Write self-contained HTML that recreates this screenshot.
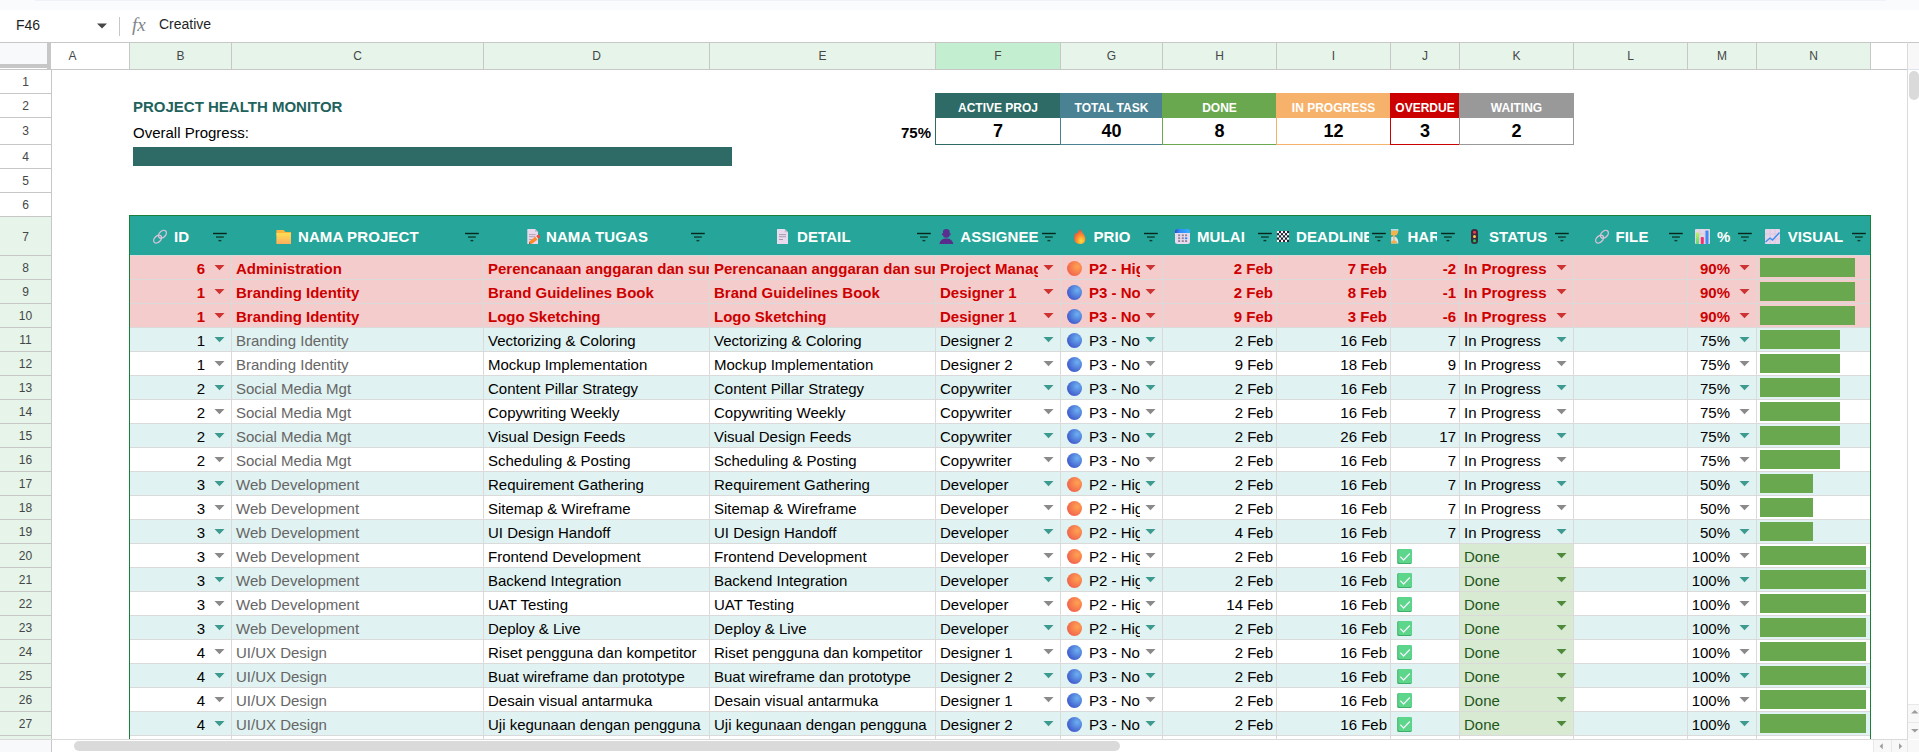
<!DOCTYPE html>
<html><head><meta charset="utf-8"><style>
html,body{margin:0;padding:0;}
body{width:1919px;height:752px;overflow:hidden;position:relative;background:#fff;font-family:"Liberation Sans", sans-serif;}
body div, body svg{position:absolute;}
.t{white-space:nowrap;}
</style></head><body>
<svg style="left:0;top:0" width="0" height="0"><defs>
<radialGradient id="go" cx="68%" cy="38%" r="80%"><stop offset="0" stop-color="#ffa252"/><stop offset="1" stop-color="#ef5a4a"/></radialGradient>
<radialGradient id="gb" cx="68%" cy="35%" r="80%"><stop offset="0" stop-color="#6cb0f0"/><stop offset="1" stop-color="#3a50c8"/></radialGradient>
<linearGradient id="gc" x1="0" y1="0" x2="0" y2="1"><stop offset="0" stop-color="#6fd38a"/><stop offset="1" stop-color="#3cae5d"/></linearGradient>
</defs></svg>
<div style="left:0px;top:0px;width:1919px;height:10px;background:#f9fbfd;"></div><div style="left:35px;top:0px;width:1851px;height:1px;background:#eef2f8;"></div><div class="t" style="left:16px;top:17px;font-size:14px;line-height:16px;color:#1f1f1f;transform-origin:0 13px;">F46</div><svg style="left:96px;top:22px" width="12" height="8"><path d="M1 1.5h10l-5 5z" fill="#444746"/></svg><div style="left:119px;top:17px;width:1px;height:19px;background:#c7c7c7;"></div><div class="t" style="left:132px;top:14px;font-size:19px;line-height:21px;color:#80868b;transform-origin:0 17px;font-family:'Liberation Serif',serif;"><i>fx</i></div><div class="t" style="left:159px;top:16px;font-size:14px;line-height:16px;color:#1f1f1f;transform-origin:0 13px;">Creative</div><div style="left:0px;top:42px;width:1907px;height:1px;background:#c7c7c7;"></div><div style="left:0px;top:69px;width:1907px;height:1px;background:#c7c7c7;"></div><div style="left:0px;top:43px;width:47px;height:21px;background:#f8f9fa;"></div><div style="left:47px;top:43px;width:4px;height:26px;background:#c7c7c7;"></div><div style="left:0px;top:64px;width:47px;height:4px;background:#c7c7c7;"></div><div style="left:52px;top:43px;width:77px;height:26px;background:#ffffff;"></div><div style="left:129px;top:43px;width:1px;height:26px;background:#c7c7c7;"></div><div class="t" style="left:51px;top:49px;font-size:12px;line-height:14px;color:#444746;transform-origin:0 11px;width:43px;text-align:center;">A</div><div style="left:130px;top:43px;width:101px;height:26px;background:#e6f4ea;"></div><div style="left:231px;top:43px;width:1px;height:26px;background:#c7c7c7;"></div><div class="t" style="left:130px;top:49px;font-size:12px;line-height:14px;color:#444746;transform-origin:0 11px;width:101px;text-align:center;">B</div><div style="left:232px;top:43px;width:251px;height:26px;background:#e6f4ea;"></div><div style="left:483px;top:43px;width:1px;height:26px;background:#c7c7c7;"></div><div class="t" style="left:232px;top:49px;font-size:12px;line-height:14px;color:#444746;transform-origin:0 11px;width:251px;text-align:center;">C</div><div style="left:484px;top:43px;width:225px;height:26px;background:#e6f4ea;"></div><div style="left:709px;top:43px;width:1px;height:26px;background:#c7c7c7;"></div><div class="t" style="left:484px;top:49px;font-size:12px;line-height:14px;color:#444746;transform-origin:0 11px;width:225px;text-align:center;">D</div><div style="left:710px;top:43px;width:225px;height:26px;background:#e6f4ea;"></div><div style="left:935px;top:43px;width:1px;height:26px;background:#c7c7c7;"></div><div class="t" style="left:710px;top:49px;font-size:12px;line-height:14px;color:#444746;transform-origin:0 11px;width:225px;text-align:center;">E</div><div style="left:936px;top:43px;width:124px;height:26px;background:#c4eed0;"></div><div style="left:1060px;top:43px;width:1px;height:26px;background:#c7c7c7;"></div><div class="t" style="left:936px;top:49px;font-size:12px;line-height:14px;color:#444746;transform-origin:0 11px;width:124px;text-align:center;">F</div><div style="left:1061px;top:43px;width:101px;height:26px;background:#e6f4ea;"></div><div style="left:1162px;top:43px;width:1px;height:26px;background:#c7c7c7;"></div><div class="t" style="left:1061px;top:49px;font-size:12px;line-height:14px;color:#444746;transform-origin:0 11px;width:101px;text-align:center;">G</div><div style="left:1163px;top:43px;width:113px;height:26px;background:#e6f4ea;"></div><div style="left:1276px;top:43px;width:1px;height:26px;background:#c7c7c7;"></div><div class="t" style="left:1163px;top:49px;font-size:12px;line-height:14px;color:#444746;transform-origin:0 11px;width:113px;text-align:center;">H</div><div style="left:1277px;top:43px;width:113px;height:26px;background:#e6f4ea;"></div><div style="left:1390px;top:43px;width:1px;height:26px;background:#c7c7c7;"></div><div class="t" style="left:1277px;top:49px;font-size:12px;line-height:14px;color:#444746;transform-origin:0 11px;width:113px;text-align:center;">I</div><div style="left:1391px;top:43px;width:68px;height:26px;background:#e6f4ea;"></div><div style="left:1459px;top:43px;width:1px;height:26px;background:#c7c7c7;"></div><div class="t" style="left:1391px;top:49px;font-size:12px;line-height:14px;color:#444746;transform-origin:0 11px;width:68px;text-align:center;">J</div><div style="left:1460px;top:43px;width:113px;height:26px;background:#e6f4ea;"></div><div style="left:1573px;top:43px;width:1px;height:26px;background:#c7c7c7;"></div><div class="t" style="left:1460px;top:49px;font-size:12px;line-height:14px;color:#444746;transform-origin:0 11px;width:113px;text-align:center;">K</div><div style="left:1574px;top:43px;width:113px;height:26px;background:#e6f4ea;"></div><div style="left:1687px;top:43px;width:1px;height:26px;background:#c7c7c7;"></div><div class="t" style="left:1574px;top:49px;font-size:12px;line-height:14px;color:#444746;transform-origin:0 11px;width:113px;text-align:center;">L</div><div style="left:1688px;top:43px;width:68px;height:26px;background:#e6f4ea;"></div><div style="left:1756px;top:43px;width:1px;height:26px;background:#c7c7c7;"></div><div class="t" style="left:1688px;top:49px;font-size:12px;line-height:14px;color:#444746;transform-origin:0 11px;width:68px;text-align:center;">M</div><div style="left:1757px;top:43px;width:113px;height:26px;background:#e6f4ea;"></div><div style="left:1870px;top:43px;width:1px;height:26px;background:#c7c7c7;"></div><div class="t" style="left:1757px;top:49px;font-size:12px;line-height:14px;color:#444746;transform-origin:0 11px;width:113px;text-align:center;">N</div><div style="left:0px;top:70px;width:51px;height:23px;background:#ffffff;"></div><div style="left:0px;top:93px;width:51px;height:1px;background:#c7c7c7;"></div><div class="t" style="left:0px;top:75px;font-size:12px;line-height:14px;color:#444746;transform-origin:0 11px;width:51px;text-align:center;">1</div><div style="left:0px;top:94px;width:51px;height:23px;background:#ffffff;"></div><div style="left:0px;top:117px;width:51px;height:1px;background:#c7c7c7;"></div><div class="t" style="left:0px;top:99px;font-size:12px;line-height:14px;color:#444746;transform-origin:0 11px;width:51px;text-align:center;">2</div><div style="left:0px;top:118px;width:51px;height:26px;background:#ffffff;"></div><div style="left:0px;top:144px;width:51px;height:1px;background:#c7c7c7;"></div><div class="t" style="left:0px;top:124px;font-size:12px;line-height:14px;color:#444746;transform-origin:0 11px;width:51px;text-align:center;">3</div><div style="left:0px;top:145px;width:51px;height:23px;background:#ffffff;"></div><div style="left:0px;top:168px;width:51px;height:1px;background:#c7c7c7;"></div><div class="t" style="left:0px;top:150px;font-size:12px;line-height:14px;color:#444746;transform-origin:0 11px;width:51px;text-align:center;">4</div><div style="left:0px;top:169px;width:51px;height:23px;background:#ffffff;"></div><div style="left:0px;top:192px;width:51px;height:1px;background:#c7c7c7;"></div><div class="t" style="left:0px;top:174px;font-size:12px;line-height:14px;color:#444746;transform-origin:0 11px;width:51px;text-align:center;">5</div><div style="left:0px;top:193px;width:51px;height:23px;background:#ffffff;"></div><div style="left:0px;top:216px;width:51px;height:1px;background:#c7c7c7;"></div><div class="t" style="left:0px;top:198px;font-size:12px;line-height:14px;color:#444746;transform-origin:0 11px;width:51px;text-align:center;">6</div><div style="left:0px;top:217px;width:51px;height:38px;background:#e6f4ea;"></div><div style="left:0px;top:255px;width:51px;height:1px;background:#c7c7c7;"></div><div class="t" style="left:0px;top:230px;font-size:12px;line-height:14px;color:#444746;transform-origin:0 11px;width:51px;text-align:center;">7</div><div style="left:0px;top:256px;width:51px;height:23px;background:#e6f4ea;"></div><div style="left:0px;top:279px;width:51px;height:1px;background:#c7c7c7;"></div><div class="t" style="left:0px;top:261px;font-size:12px;line-height:14px;color:#444746;transform-origin:0 11px;width:51px;text-align:center;">8</div><div style="left:0px;top:280px;width:51px;height:23px;background:#e6f4ea;"></div><div style="left:0px;top:303px;width:51px;height:1px;background:#c7c7c7;"></div><div class="t" style="left:0px;top:285px;font-size:12px;line-height:14px;color:#444746;transform-origin:0 11px;width:51px;text-align:center;">9</div><div style="left:0px;top:304px;width:51px;height:23px;background:#e6f4ea;"></div><div style="left:0px;top:327px;width:51px;height:1px;background:#c7c7c7;"></div><div class="t" style="left:0px;top:309px;font-size:12px;line-height:14px;color:#444746;transform-origin:0 11px;width:51px;text-align:center;">10</div><div style="left:0px;top:328px;width:51px;height:23px;background:#e6f4ea;"></div><div style="left:0px;top:351px;width:51px;height:1px;background:#c7c7c7;"></div><div class="t" style="left:0px;top:333px;font-size:12px;line-height:14px;color:#444746;transform-origin:0 11px;width:51px;text-align:center;">11</div><div style="left:0px;top:352px;width:51px;height:23px;background:#e6f4ea;"></div><div style="left:0px;top:375px;width:51px;height:1px;background:#c7c7c7;"></div><div class="t" style="left:0px;top:357px;font-size:12px;line-height:14px;color:#444746;transform-origin:0 11px;width:51px;text-align:center;">12</div><div style="left:0px;top:376px;width:51px;height:23px;background:#e6f4ea;"></div><div style="left:0px;top:399px;width:51px;height:1px;background:#c7c7c7;"></div><div class="t" style="left:0px;top:381px;font-size:12px;line-height:14px;color:#444746;transform-origin:0 11px;width:51px;text-align:center;">13</div><div style="left:0px;top:400px;width:51px;height:23px;background:#e6f4ea;"></div><div style="left:0px;top:423px;width:51px;height:1px;background:#c7c7c7;"></div><div class="t" style="left:0px;top:405px;font-size:12px;line-height:14px;color:#444746;transform-origin:0 11px;width:51px;text-align:center;">14</div><div style="left:0px;top:424px;width:51px;height:23px;background:#e6f4ea;"></div><div style="left:0px;top:447px;width:51px;height:1px;background:#c7c7c7;"></div><div class="t" style="left:0px;top:429px;font-size:12px;line-height:14px;color:#444746;transform-origin:0 11px;width:51px;text-align:center;">15</div><div style="left:0px;top:448px;width:51px;height:23px;background:#e6f4ea;"></div><div style="left:0px;top:471px;width:51px;height:1px;background:#c7c7c7;"></div><div class="t" style="left:0px;top:453px;font-size:12px;line-height:14px;color:#444746;transform-origin:0 11px;width:51px;text-align:center;">16</div><div style="left:0px;top:472px;width:51px;height:23px;background:#e6f4ea;"></div><div style="left:0px;top:495px;width:51px;height:1px;background:#c7c7c7;"></div><div class="t" style="left:0px;top:477px;font-size:12px;line-height:14px;color:#444746;transform-origin:0 11px;width:51px;text-align:center;">17</div><div style="left:0px;top:496px;width:51px;height:23px;background:#e6f4ea;"></div><div style="left:0px;top:519px;width:51px;height:1px;background:#c7c7c7;"></div><div class="t" style="left:0px;top:501px;font-size:12px;line-height:14px;color:#444746;transform-origin:0 11px;width:51px;text-align:center;">18</div><div style="left:0px;top:520px;width:51px;height:23px;background:#e6f4ea;"></div><div style="left:0px;top:543px;width:51px;height:1px;background:#c7c7c7;"></div><div class="t" style="left:0px;top:525px;font-size:12px;line-height:14px;color:#444746;transform-origin:0 11px;width:51px;text-align:center;">19</div><div style="left:0px;top:544px;width:51px;height:23px;background:#e6f4ea;"></div><div style="left:0px;top:567px;width:51px;height:1px;background:#c7c7c7;"></div><div class="t" style="left:0px;top:549px;font-size:12px;line-height:14px;color:#444746;transform-origin:0 11px;width:51px;text-align:center;">20</div><div style="left:0px;top:568px;width:51px;height:23px;background:#e6f4ea;"></div><div style="left:0px;top:591px;width:51px;height:1px;background:#c7c7c7;"></div><div class="t" style="left:0px;top:573px;font-size:12px;line-height:14px;color:#444746;transform-origin:0 11px;width:51px;text-align:center;">21</div><div style="left:0px;top:592px;width:51px;height:23px;background:#e6f4ea;"></div><div style="left:0px;top:615px;width:51px;height:1px;background:#c7c7c7;"></div><div class="t" style="left:0px;top:597px;font-size:12px;line-height:14px;color:#444746;transform-origin:0 11px;width:51px;text-align:center;">22</div><div style="left:0px;top:616px;width:51px;height:23px;background:#e6f4ea;"></div><div style="left:0px;top:639px;width:51px;height:1px;background:#c7c7c7;"></div><div class="t" style="left:0px;top:621px;font-size:12px;line-height:14px;color:#444746;transform-origin:0 11px;width:51px;text-align:center;">23</div><div style="left:0px;top:640px;width:51px;height:23px;background:#e6f4ea;"></div><div style="left:0px;top:663px;width:51px;height:1px;background:#c7c7c7;"></div><div class="t" style="left:0px;top:645px;font-size:12px;line-height:14px;color:#444746;transform-origin:0 11px;width:51px;text-align:center;">24</div><div style="left:0px;top:664px;width:51px;height:23px;background:#e6f4ea;"></div><div style="left:0px;top:687px;width:51px;height:1px;background:#c7c7c7;"></div><div class="t" style="left:0px;top:669px;font-size:12px;line-height:14px;color:#444746;transform-origin:0 11px;width:51px;text-align:center;">25</div><div style="left:0px;top:688px;width:51px;height:23px;background:#e6f4ea;"></div><div style="left:0px;top:711px;width:51px;height:1px;background:#c7c7c7;"></div><div class="t" style="left:0px;top:693px;font-size:12px;line-height:14px;color:#444746;transform-origin:0 11px;width:51px;text-align:center;">26</div><div style="left:0px;top:712px;width:51px;height:23px;background:#e6f4ea;"></div><div style="left:0px;top:735px;width:51px;height:1px;background:#c7c7c7;"></div><div class="t" style="left:0px;top:717px;font-size:12px;line-height:14px;color:#444746;transform-origin:0 11px;width:51px;text-align:center;">27</div><div style="left:51px;top:70px;width:1px;height:670px;background:#c7c7c7;"></div><div style="left:0px;top:736px;width:51px;height:4px;background:#e6f4ea;"></div><div class="t" style="left:133px;top:98px;font-size:15px;line-height:17px;color:#21625c;transform-origin:0 14px;font-weight:bold;">PROJECT HEALTH MONITOR</div><div class="t" style="left:133px;top:124px;font-size:15px;line-height:17px;color:#000;transform-origin:0 14px;">Overall Progress:</div><div style="left:133px;top:147px;width:599px;height:19px;background:#2e6b66;"></div><div class="t" style="left:709px;top:124px;font-size:15px;line-height:17px;color:#000;transform-origin:0 14px;font-weight:bold;width:222px;text-align:right;">75%</div><div style="left:935px;top:93px;width:126px;height:25px;background:#2e6b66;"></div><div class="t" style="left:935px;top:101px;font-size:12px;line-height:14px;color:#ffffff;transform-origin:0 11px;font-weight:bold;width:126px;text-align:center;">ACTIVE PROJ</div><div style="left:935px;top:117px;width:124px;height:26px;border:1px solid #2e6b66;background:#fff"></div><div class="t" style="left:935px;top:121px;font-size:18px;line-height:20px;color:#000;transform-origin:0 16px;font-weight:bold;width:126px;text-align:center;">7</div><div style="left:1060px;top:93px;width:103px;height:25px;background:#4a8294;"></div><div class="t" style="left:1060px;top:101px;font-size:12px;line-height:14px;color:#ffffff;transform-origin:0 11px;font-weight:bold;width:103px;text-align:center;">TOTAL TASK</div><div style="left:1060px;top:117px;width:101px;height:26px;border:1px solid #4a8294;background:#fff"></div><div class="t" style="left:1060px;top:121px;font-size:18px;line-height:20px;color:#000;transform-origin:0 16px;font-weight:bold;width:103px;text-align:center;">40</div><div style="left:1162px;top:93px;width:115px;height:25px;background:#6aa84f;"></div><div class="t" style="left:1162px;top:101px;font-size:12px;line-height:14px;color:#ffffff;transform-origin:0 11px;font-weight:bold;width:115px;text-align:center;">DONE</div><div style="left:1162px;top:117px;width:113px;height:26px;border:1px solid #6aa84f;background:#fff"></div><div class="t" style="left:1162px;top:121px;font-size:18px;line-height:20px;color:#000;transform-origin:0 16px;font-weight:bold;width:115px;text-align:center;">8</div><div style="left:1276px;top:93px;width:115px;height:25px;background:#f6b26b;"></div><div class="t" style="left:1276px;top:101px;font-size:12px;line-height:14px;color:#ffffff;transform-origin:0 11px;font-weight:bold;width:115px;text-align:center;">IN PROGRESS</div><div style="left:1276px;top:117px;width:113px;height:26px;border:1px solid #f6b26b;background:#fff"></div><div class="t" style="left:1276px;top:121px;font-size:18px;line-height:20px;color:#000;transform-origin:0 16px;font-weight:bold;width:115px;text-align:center;">12</div><div style="left:1390px;top:93px;width:70px;height:25px;background:#cc0000;"></div><div class="t" style="left:1390px;top:101px;font-size:12px;line-height:14px;color:#ffffff;transform-origin:0 11px;font-weight:bold;width:70px;text-align:center;">OVERDUE</div><div style="left:1390px;top:117px;width:68px;height:26px;border:1px solid #cc0000;background:#fff"></div><div class="t" style="left:1390px;top:121px;font-size:18px;line-height:20px;color:#000;transform-origin:0 16px;font-weight:bold;width:70px;text-align:center;">3</div><div style="left:1459px;top:93px;width:115px;height:25px;background:#999999;"></div><div class="t" style="left:1459px;top:101px;font-size:12px;line-height:14px;color:#ffffff;transform-origin:0 11px;font-weight:bold;width:115px;text-align:center;">WAITING</div><div style="left:1459px;top:117px;width:113px;height:26px;border:1px solid #999999;background:#fff"></div><div class="t" style="left:1459px;top:121px;font-size:18px;line-height:20px;color:#000;transform-origin:0 16px;font-weight:bold;width:115px;text-align:center;">2</div><div style="left:129px;top:216px;width:1742px;height:39px;background:#26a69a;"></div><div style="left:174px;top:226px;width:36px;height:22px;overflow:hidden"><div class="t" style="left:0px;top:2px;font-size:15px;line-height:17px;color:#ffffff;transform-origin:0 14px;font-weight:bold;letter-spacing:0.1px;">ID</div></div><svg style="left:213px;top:232px" width="15" height="10"><rect x="0" y="0.8" width="13.8" height="1.4" fill="#08261a"/><rect x="3" y="4.3" width="7.8" height="1.5" fill="#0f4535"/><rect x="5.5" y="7.9" width="2.8" height="1.4" fill="#0c3a2b"/></svg><div style="left:298px;top:226px;width:164px;height:22px;overflow:hidden"><div class="t" style="left:0px;top:2px;font-size:15px;line-height:17px;color:#ffffff;transform-origin:0 14px;font-weight:bold;letter-spacing:0.1px;">NAMA PROJECT</div></div><svg style="left:465px;top:232px" width="15" height="10"><rect x="0" y="0.8" width="13.8" height="1.4" fill="#08261a"/><rect x="3" y="4.3" width="7.8" height="1.5" fill="#0f4535"/><rect x="5.5" y="7.9" width="2.8" height="1.4" fill="#0c3a2b"/></svg><div style="left:546px;top:226px;width:142px;height:22px;overflow:hidden"><div class="t" style="left:0px;top:2px;font-size:15px;line-height:17px;color:#ffffff;transform-origin:0 14px;font-weight:bold;letter-spacing:0.1px;">NAMA TUGAS</div></div><svg style="left:691px;top:232px" width="15" height="10"><rect x="0" y="0.8" width="13.8" height="1.4" fill="#08261a"/><rect x="3" y="4.3" width="7.8" height="1.5" fill="#0f4535"/><rect x="5.5" y="7.9" width="2.8" height="1.4" fill="#0c3a2b"/></svg><div style="left:797px;top:226px;width:117px;height:22px;overflow:hidden"><div class="t" style="left:0px;top:2px;font-size:15px;line-height:17px;color:#ffffff;transform-origin:0 14px;font-weight:bold;letter-spacing:0.1px;">DETAIL</div></div><svg style="left:917px;top:232px" width="15" height="10"><rect x="0" y="0.8" width="13.8" height="1.4" fill="#08261a"/><rect x="3" y="4.3" width="7.8" height="1.5" fill="#0f4535"/><rect x="5.5" y="7.9" width="2.8" height="1.4" fill="#0c3a2b"/></svg><div style="left:960.3px;top:226px;width:78.70000000000005px;height:22px;overflow:hidden"><div class="t" style="left:0px;top:2px;font-size:15px;line-height:17px;color:#ffffff;transform-origin:0 14px;font-weight:bold;letter-spacing:0.1px;">ASSIGNEE</div></div><svg style="left:1042px;top:232px" width="15" height="10"><rect x="0" y="0.8" width="13.8" height="1.4" fill="#08261a"/><rect x="3" y="4.3" width="7.8" height="1.5" fill="#0f4535"/><rect x="5.5" y="7.9" width="2.8" height="1.4" fill="#0c3a2b"/></svg><div style="left:1093.5px;top:226px;width:47.5px;height:22px;overflow:hidden"><div class="t" style="left:0px;top:2px;font-size:15px;line-height:17px;color:#ffffff;transform-origin:0 14px;font-weight:bold;letter-spacing:0.1px;">PRIO</div></div><svg style="left:1144px;top:232px" width="15" height="10"><rect x="0" y="0.8" width="13.8" height="1.4" fill="#08261a"/><rect x="3" y="4.3" width="7.8" height="1.5" fill="#0f4535"/><rect x="5.5" y="7.9" width="2.8" height="1.4" fill="#0c3a2b"/></svg><div style="left:1197px;top:226px;width:58px;height:22px;overflow:hidden"><div class="t" style="left:0px;top:2px;font-size:15px;line-height:17px;color:#ffffff;transform-origin:0 14px;font-weight:bold;letter-spacing:0.1px;">MULAI</div></div><svg style="left:1258px;top:232px" width="15" height="10"><rect x="0" y="0.8" width="13.8" height="1.4" fill="#08261a"/><rect x="3" y="4.3" width="7.8" height="1.5" fill="#0f4535"/><rect x="5.5" y="7.9" width="2.8" height="1.4" fill="#0c3a2b"/></svg><div style="left:1296px;top:226px;width:73px;height:22px;overflow:hidden"><div class="t" style="left:0px;top:2px;font-size:15px;line-height:17px;color:#ffffff;transform-origin:0 14px;font-weight:bold;letter-spacing:0.1px;">DEADLINE</div></div><svg style="left:1372px;top:232px" width="15" height="10"><rect x="0" y="0.8" width="13.8" height="1.4" fill="#08261a"/><rect x="3" y="4.3" width="7.8" height="1.5" fill="#0f4535"/><rect x="5.5" y="7.9" width="2.8" height="1.4" fill="#0c3a2b"/></svg><div style="left:1407.4px;top:226px;width:29.59999999999991px;height:22px;overflow:hidden"><div class="t" style="left:0px;top:2px;font-size:15px;line-height:17px;color:#ffffff;transform-origin:0 14px;font-weight:bold;letter-spacing:0.1px;">HARI</div></div><svg style="left:1441px;top:232px" width="15" height="10"><rect x="0" y="0.8" width="13.8" height="1.4" fill="#08261a"/><rect x="3" y="4.3" width="7.8" height="1.5" fill="#0f4535"/><rect x="5.5" y="7.9" width="2.8" height="1.4" fill="#0c3a2b"/></svg><div style="left:1489px;top:226px;width:63px;height:22px;overflow:hidden"><div class="t" style="left:0px;top:2px;font-size:15px;line-height:17px;color:#ffffff;transform-origin:0 14px;font-weight:bold;letter-spacing:0.1px;">STATUS</div></div><svg style="left:1555px;top:232px" width="15" height="10"><rect x="0" y="0.8" width="13.8" height="1.4" fill="#08261a"/><rect x="3" y="4.3" width="7.8" height="1.5" fill="#0f4535"/><rect x="5.5" y="7.9" width="2.8" height="1.4" fill="#0c3a2b"/></svg><div style="left:1615.6px;top:226px;width:50.40000000000009px;height:22px;overflow:hidden"><div class="t" style="left:0px;top:2px;font-size:15px;line-height:17px;color:#ffffff;transform-origin:0 14px;font-weight:bold;letter-spacing:0.1px;">FILE</div></div><svg style="left:1669px;top:232px" width="15" height="10"><rect x="0" y="0.8" width="13.8" height="1.4" fill="#08261a"/><rect x="3" y="4.3" width="7.8" height="1.5" fill="#0f4535"/><rect x="5.5" y="7.9" width="2.8" height="1.4" fill="#0c3a2b"/></svg><div style="left:1717px;top:226px;width:18px;height:22px;overflow:hidden"><div class="t" style="left:0px;top:2px;font-size:15px;line-height:17px;color:#ffffff;transform-origin:0 14px;font-weight:bold;letter-spacing:0.1px;">%</div></div><svg style="left:1738px;top:232px" width="15" height="10"><rect x="0" y="0.8" width="13.8" height="1.4" fill="#08261a"/><rect x="3" y="4.3" width="7.8" height="1.5" fill="#0f4535"/><rect x="5.5" y="7.9" width="2.8" height="1.4" fill="#0c3a2b"/></svg><div style="left:1787.7px;top:226px;width:61.299999999999955px;height:22px;overflow:hidden"><div class="t" style="left:0px;top:2px;font-size:15px;line-height:17px;color:#ffffff;transform-origin:0 14px;font-weight:bold;letter-spacing:0.1px;">VISUAL</div></div><svg style="left:1852px;top:232px" width="15" height="10"><rect x="0" y="0.8" width="13.8" height="1.4" fill="#08261a"/><rect x="3" y="4.3" width="7.8" height="1.5" fill="#0f4535"/><rect x="5.5" y="7.9" width="2.8" height="1.4" fill="#0c3a2b"/></svg><svg style="left:152px;top:229px" width="16" height="16" viewBox="0 0 16 16"><g fill="none" stroke="#d9c3da" stroke-width="1.35"><ellipse cx="10.4" cy="5.3" rx="4.6" ry="3.1" transform="rotate(-45 10.4 5.3)"/><ellipse cx="5.6" cy="10.1" rx="4.6" ry="3.1" transform="rotate(-45 5.6 10.1)"/></g></svg><svg style="left:1594px;top:229px" width="16" height="16" viewBox="0 0 16 16"><g fill="none" stroke="#d9c3da" stroke-width="1.35"><ellipse cx="10.4" cy="5.3" rx="4.6" ry="3.1" transform="rotate(-45 10.4 5.3)"/><ellipse cx="5.6" cy="10.1" rx="4.6" ry="3.1" transform="rotate(-45 5.6 10.1)"/></g></svg><svg style="left:276px;top:230px" width="15" height="14" viewBox="0 0 15 14"><defs><linearGradient id="fg" x1="0" y1="0" x2="0" y2="1"><stop offset="0" stop-color="#ffde55"/><stop offset="1" stop-color="#ffae5c"/></linearGradient></defs><path d="M0.4 0.6q0-0.6 0.6-0.6h6.6l1.8 2h5.6v3h-14.6z" fill="#ffb43e"/><rect x="0.4" y="3" width="14.6" height="11" fill="url(#fg)"/></svg><svg style="left:527px;top:229px" width="13" height="15" viewBox="0 0 13 15"><path d="M0.3 0h7.7l3 3v12h-10.7z" fill="#e8d9ec"/><path d="M8 0v3h3z" fill="#c9bccd"/><rect x="2" y="5.2" width="6.5" height="0.9" fill="#a99dad"/><rect x="2" y="7.3" width="6.5" height="0.9" fill="#a99dad"/><rect x="2" y="10" width="3" height="0.9" fill="#a99dad"/><g transform="translate(2.0,14.9) rotate(-38)"><path d="M0 0L1.6 -1.75V1.75z" fill="#8a5a4a"/><rect x="1.6" y="-1.75" width="7.9" height="3.5" fill="#ff8a2a"/><rect x="9.5" y="-1.75" width="1" height="3.5" fill="#ece4f2"/><rect x="10.5" y="-1.75" width="3" height="3.5" rx="0.5" fill="#f2493f"/></g></svg><svg style="left:777px;top:229px" width="11" height="15" viewBox="0 0 11 15"><path d="M0 0h7.7l3.3 3.3v11.7h-11z" fill="#e9dbee"/><path d="M7.7 0v3.3h3.3z" fill="#c8bccc"/><rect x="2" y="5.2" width="7" height="0.9" fill="#9e94a3"/><rect x="2" y="7.3" width="7" height="0.9" fill="#9e94a3"/><rect x="2" y="10" width="4" height="0.9" fill="#9e94a3"/></svg><svg style="left:939px;top:229px" width="15" height="15" viewBox="0 0 15 15"><path d="M4 2.5q0-2.5 3.3-2.5t3.4 2.5v3.3q0 2.9-3.4 2.9t-3.3-2.9z" fill="#5b2f8f"/><ellipse cx="3.6" cy="5.3" rx="0.8" ry="1" fill="#5b2f8f"/><ellipse cx="11" cy="5.3" rx="0.8" ry="1" fill="#5b2f8f"/><path d="M0.4 15q0.6-5.6 6.9-5.6t7 5.6z" fill="#5a2d8c"/></svg><svg style="left:1074px;top:229px" width="12" height="15" viewBox="0 0 12 15"><defs><radialGradient id="fr" cx="0.62" cy="0.8" r="0.85"><stop offset="0" stop-color="#ffe23a"/><stop offset="0.45" stop-color="#ff8f2e"/><stop offset="1" stop-color="#ec3a3f"/></radialGradient></defs><path d="M6.4 0Q7.2 2.5 9.3 4.8Q11.4 7.2 11.4 10Q11.4 15 6 15Q0.2 15 0.2 9.6Q0.2 5.6 1.9 3.3Q2.6 4.6 3.8 4.4Q4.2 1.6 6.4 0z" fill="url(#fr)"/></svg><svg style="left:1175px;top:229px" width="15" height="15" viewBox="0 0 15 15"><defs><linearGradient id="cb" x1="0" y1="0" x2="1" y2="0"><stop offset="0" stop-color="#3545d8"/><stop offset="0.3" stop-color="#2f8af5"/><stop offset="1" stop-color="#35b0ff"/></linearGradient></defs><path d="M0 4h15v8.5q0 2.5-2.5 2.5h-10q-2.5 0-2.5-2.5z" fill="#e7daef"/><path d="M0 4v-1.5q0-2.5 2.5-2.5h10q2.5 0 2.5 2.5v1.5z" fill="url(#cb)"/><g fill="#8e8394"><rect x="3.1" y="5.4" width="2" height="1.8"/><rect x="6.8" y="5.4" width="2" height="1.8"/><rect x="10.1" y="5.4" width="2" height="1.8"/><rect x="3.1" y="8.3" width="2" height="1.8"/><rect x="6.8" y="8.3" width="2" height="1.8"/><rect x="3.1" y="11.2" width="2" height="1.8"/><rect x="6.8" y="11.2" width="2" height="1.8"/><rect x="10.1" y="11.2" width="2" height="1.8"/></g><rect x="9.9" y="8.2" width="2.4" height="2" rx="0.8" fill="#2f8af5"/></svg><svg style="left:1277px;top:231px" width="12" height="11" viewBox="0 0 12 11"><rect x="0" y="0.0" width="2" height="2.2" fill="#fdf2fc"/><rect x="2" y="0.0" width="2" height="2.2" fill="#2a1f2a"/><rect x="4" y="0.0" width="2" height="2.2" fill="#fdf2fc"/><rect x="6" y="0.0" width="2" height="2.2" fill="#2a1f2a"/><rect x="8" y="0.0" width="2" height="2.2" fill="#fdf2fc"/><rect x="10" y="0.0" width="2" height="2.2" fill="#2a1f2a"/><rect x="0" y="2.2" width="2" height="2.2" fill="#2a1f2a"/><rect x="2" y="2.2" width="2" height="2.2" fill="#fdf2fc"/><rect x="4" y="2.2" width="2" height="2.2" fill="#2a1f2a"/><rect x="6" y="2.2" width="2" height="2.2" fill="#fdf2fc"/><rect x="8" y="2.2" width="2" height="2.2" fill="#2a1f2a"/><rect x="10" y="2.2" width="2" height="2.2" fill="#fdf2fc"/><rect x="0" y="4.4" width="2" height="2.2" fill="#fdf2fc"/><rect x="2" y="4.4" width="2" height="2.2" fill="#2a1f2a"/><rect x="4" y="4.4" width="2" height="2.2" fill="#fdf2fc"/><rect x="6" y="4.4" width="2" height="2.2" fill="#2a1f2a"/><rect x="8" y="4.4" width="2" height="2.2" fill="#fdf2fc"/><rect x="10" y="4.4" width="2" height="2.2" fill="#2a1f2a"/><rect x="0" y="6.6" width="2" height="2.2" fill="#2a1f2a"/><rect x="2" y="6.6" width="2" height="2.2" fill="#fdf2fc"/><rect x="4" y="6.6" width="2" height="2.2" fill="#2a1f2a"/><rect x="6" y="6.6" width="2" height="2.2" fill="#fdf2fc"/><rect x="8" y="6.6" width="2" height="2.2" fill="#2a1f2a"/><rect x="10" y="6.6" width="2" height="2.2" fill="#fdf2fc"/><rect x="0" y="8.8" width="2" height="2.2" fill="#fdf2fc"/><rect x="2" y="8.8" width="2" height="2.2" fill="#2a1f2a"/><rect x="4" y="8.8" width="2" height="2.2" fill="#fdf2fc"/><rect x="6" y="8.8" width="2" height="2.2" fill="#2a1f2a"/><rect x="8" y="8.8" width="2" height="2.2" fill="#fdf2fc"/><rect x="10" y="8.8" width="2" height="2.2" fill="#2a1f2a"/></svg><svg style="left:1391px;top:229px" width="8" height="15" viewBox="0 0 8 15"><path d="M0.2 8.3L2.2 7.2L5 8Q7.6 10 7.3 14.6H0.2z" fill="#cde7fb"/><rect x="0" y="0.2" width="7.4" height="1.5" fill="#d7ecf6"/><path d="M0 1.7H7.3Q7.3 4.6 5.6 6.2H0z" fill="#f6b24b"/><path d="M1.9 6H4L3.6 7.5V10.5L4 11.6H1.9L2.3 10.5V7.5z" fill="#f3b04d"/><path d="M0 14.5V12.8L2.1 11.3H3.8L6 12.8L6.2 14.5z" fill="#f6ae48"/></svg><svg style="left:1471px;top:229px" width="7" height="15" viewBox="0 0 7 15"><rect x="0" y="0" width="7" height="15" rx="3.3" fill="#3b2d3d"/><circle cx="3.5" cy="3.3" r="1.5" fill="#f5384a"/><circle cx="3.5" cy="7.5" r="1.5" fill="#ffc94a"/><circle cx="3.5" cy="11.7" r="1.5" fill="#27c55a"/></svg><svg style="left:1695px;top:229px" width="15" height="15" viewBox="0 0 15 15"><rect x="0" y="0" width="15" height="15" rx="1" fill="#e4d7e8"/><g stroke="#cfc2d4" stroke-width="0.5"><path d="M5 0v15M10 0v15M0 5h15M0 10h15"/></g><defs><linearGradient id="bg1" x1="0" y1="0" x2="0" y2="1"><stop offset="0" stop-color="#c5f05a"/><stop offset="1" stop-color="#5bd87a"/></linearGradient></defs><rect x="1" y="3.5" width="3" height="11.5" rx="0.8" fill="url(#bg1)"/><rect x="5.8" y="8" width="3" height="7" rx="0.8" fill="#f0336f"/><rect x="10.5" y="1.5" width="3" height="13.5" rx="0.8" fill="#3d8df5"/></svg><svg style="left:1765px;top:229px" width="15" height="15" viewBox="0 0 15 15"><rect x="0" y="0" width="15" height="15" rx="0.8" fill="#e6d5ea"/><g stroke="#cdbcd3" stroke-width="0.5"><path d="M5 0v15M10 0v15M0 5h15M0 10h15"/></g><path d="M0.5 13l4.5-4 2.5 2 7-7.5" stroke="#3a8df0" stroke-width="1.3" fill="none"/></svg><div style="left:130px;top:256px;width:1740px;height:23px;background:#f4cccc;"></div><div style="left:130px;top:279px;width:1740px;height:1px;background:#dadada;"></div><div style="left:130px;top:258px;width:101px;height:19px;overflow:hidden"><div class="t" style="right:26px;top:2px;font-size:15px;line-height:17px;color:#cc0000;transform-origin:0 14px;font-weight:bold;">6</div></div><svg style="left:214px;top:265px" width="11" height="6"><path d="M0.5 0h10l-5 5.2z" fill="#cc3333"/></svg><div style="left:232px;top:258px;width:251px;height:19px;overflow:hidden"><div class="t" style="left:4px;top:2px;font-size:15px;line-height:17px;color:#cc0000;transform-origin:0 14px;font-weight:bold;">Administration</div></div><div style="left:484px;top:258px;width:225px;height:19px;overflow:hidden"><div class="t" style="left:4px;top:2px;font-size:15px;line-height:17px;color:#cc0000;transform-origin:0 14px;font-weight:bold;">Perencanaan anggaran dan survei vendor</div></div><div style="left:710px;top:258px;width:225px;height:19px;overflow:hidden"><div class="t" style="left:4px;top:2px;font-size:15px;line-height:17px;color:#cc0000;transform-origin:0 14px;font-weight:bold;">Perencanaan anggaran dan survei vendor</div></div><div style="left:936px;top:258px;width:102px;height:19px;overflow:hidden"><div class="t" style="left:4px;top:2px;font-size:15px;line-height:17px;color:#cc0000;transform-origin:0 14px;font-weight:bold;">Project Manager</div></div><svg style="left:1043px;top:265px" width="11" height="6"><path d="M0.5 0h10l-5 5.2z" fill="#cc3333"/></svg><svg style="left:1067px;top:261px" width="15" height="15"><circle cx="7.5" cy="7.5" r="7.5" fill="url(#go)"/></svg><div style="left:1086px;top:258px;width:54px;height:19px;overflow:hidden"><div class="t" style="left:3px;top:2px;font-size:15px;line-height:17px;color:#cc0000;transform-origin:0 14px;font-weight:bold;">P2 - High</div></div><svg style="left:1145px;top:265px" width="11" height="6"><path d="M0.5 0h10l-5 5.2z" fill="#cc3333"/></svg><div style="left:1163px;top:258px;width:113px;height:19px;overflow:hidden"><div class="t" style="right:3px;top:2px;font-size:15px;line-height:17px;color:#cc0000;transform-origin:0 14px;font-weight:bold;">2 Feb</div></div><div style="left:1277px;top:258px;width:113px;height:19px;overflow:hidden"><div class="t" style="right:3px;top:2px;font-size:15px;line-height:17px;color:#cc0000;transform-origin:0 14px;font-weight:bold;">7 Feb</div></div><div style="left:1391px;top:258px;width:68px;height:19px;overflow:hidden"><div class="t" style="right:3px;top:2px;font-size:15px;line-height:17px;color:#cc0000;transform-origin:0 14px;font-weight:bold;">-2</div></div><div style="left:1460px;top:258px;width:93px;height:19px;overflow:hidden"><div class="t" style="left:4px;top:2px;font-size:15px;line-height:17px;color:#cc0000;transform-origin:0 14px;font-weight:bold;">In Progress</div></div><svg style="left:1556px;top:265px" width="11" height="6"><path d="M0.5 0h10l-5 5.2z" fill="#cc3333"/></svg><div style="left:1688px;top:258px;width:68px;height:19px;overflow:hidden"><div class="t" style="right:26px;top:2px;font-size:15px;line-height:17px;color:#cc0000;transform-origin:0 14px;font-weight:bold;">90%</div></div><svg style="left:1739px;top:265px" width="11" height="6"><path d="M0.5 0h10l-5 5.2z" fill="#cc3333"/></svg><div style="left:1760px;top:258px;width:95px;height:19px;background:#6aa84f;"></div><div style="left:231px;top:256px;width:1px;height:23px;background:#dadada;"></div><div style="left:483px;top:256px;width:1px;height:23px;background:#dadada;"></div><div style="left:709px;top:256px;width:1px;height:23px;background:#dadada;"></div><div style="left:935px;top:256px;width:1px;height:23px;background:#dadada;"></div><div style="left:1060px;top:256px;width:1px;height:23px;background:#dadada;"></div><div style="left:1162px;top:256px;width:1px;height:23px;background:#dadada;"></div><div style="left:1276px;top:256px;width:1px;height:23px;background:#dadada;"></div><div style="left:1390px;top:256px;width:1px;height:23px;background:#dadada;"></div><div style="left:1459px;top:256px;width:1px;height:23px;background:#dadada;"></div><div style="left:1573px;top:256px;width:1px;height:23px;background:#dadada;"></div><div style="left:1687px;top:256px;width:1px;height:23px;background:#dadada;"></div><div style="left:1756px;top:256px;width:1px;height:23px;background:#dadada;"></div><div style="left:130px;top:280px;width:1740px;height:23px;background:#f4cccc;"></div><div style="left:130px;top:303px;width:1740px;height:1px;background:#dadada;"></div><div style="left:130px;top:282px;width:101px;height:19px;overflow:hidden"><div class="t" style="right:26px;top:2px;font-size:15px;line-height:17px;color:#cc0000;transform-origin:0 14px;font-weight:bold;">1</div></div><svg style="left:214px;top:289px" width="11" height="6"><path d="M0.5 0h10l-5 5.2z" fill="#cc3333"/></svg><div style="left:232px;top:282px;width:251px;height:19px;overflow:hidden"><div class="t" style="left:4px;top:2px;font-size:15px;line-height:17px;color:#cc0000;transform-origin:0 14px;font-weight:bold;">Branding Identity</div></div><div style="left:484px;top:282px;width:225px;height:19px;overflow:hidden"><div class="t" style="left:4px;top:2px;font-size:15px;line-height:17px;color:#cc0000;transform-origin:0 14px;font-weight:bold;">Brand Guidelines Book</div></div><div style="left:710px;top:282px;width:225px;height:19px;overflow:hidden"><div class="t" style="left:4px;top:2px;font-size:15px;line-height:17px;color:#cc0000;transform-origin:0 14px;font-weight:bold;">Brand Guidelines Book</div></div><div style="left:936px;top:282px;width:102px;height:19px;overflow:hidden"><div class="t" style="left:4px;top:2px;font-size:15px;line-height:17px;color:#cc0000;transform-origin:0 14px;font-weight:bold;">Designer 1</div></div><svg style="left:1043px;top:289px" width="11" height="6"><path d="M0.5 0h10l-5 5.2z" fill="#cc3333"/></svg><svg style="left:1067px;top:285px" width="15" height="15"><circle cx="7.5" cy="7.5" r="7.5" fill="url(#gb)"/></svg><div style="left:1086px;top:282px;width:54px;height:19px;overflow:hidden"><div class="t" style="left:3px;top:2px;font-size:15px;line-height:17px;color:#cc0000;transform-origin:0 14px;font-weight:bold;">P3 - Normal</div></div><svg style="left:1145px;top:289px" width="11" height="6"><path d="M0.5 0h10l-5 5.2z" fill="#cc3333"/></svg><div style="left:1163px;top:282px;width:113px;height:19px;overflow:hidden"><div class="t" style="right:3px;top:2px;font-size:15px;line-height:17px;color:#cc0000;transform-origin:0 14px;font-weight:bold;">2 Feb</div></div><div style="left:1277px;top:282px;width:113px;height:19px;overflow:hidden"><div class="t" style="right:3px;top:2px;font-size:15px;line-height:17px;color:#cc0000;transform-origin:0 14px;font-weight:bold;">8 Feb</div></div><div style="left:1391px;top:282px;width:68px;height:19px;overflow:hidden"><div class="t" style="right:3px;top:2px;font-size:15px;line-height:17px;color:#cc0000;transform-origin:0 14px;font-weight:bold;">-1</div></div><div style="left:1460px;top:282px;width:93px;height:19px;overflow:hidden"><div class="t" style="left:4px;top:2px;font-size:15px;line-height:17px;color:#cc0000;transform-origin:0 14px;font-weight:bold;">In Progress</div></div><svg style="left:1556px;top:289px" width="11" height="6"><path d="M0.5 0h10l-5 5.2z" fill="#cc3333"/></svg><div style="left:1688px;top:282px;width:68px;height:19px;overflow:hidden"><div class="t" style="right:26px;top:2px;font-size:15px;line-height:17px;color:#cc0000;transform-origin:0 14px;font-weight:bold;">90%</div></div><svg style="left:1739px;top:289px" width="11" height="6"><path d="M0.5 0h10l-5 5.2z" fill="#cc3333"/></svg><div style="left:1760px;top:282px;width:95px;height:19px;background:#6aa84f;"></div><div style="left:231px;top:280px;width:1px;height:23px;background:#dadada;"></div><div style="left:483px;top:280px;width:1px;height:23px;background:#dadada;"></div><div style="left:709px;top:280px;width:1px;height:23px;background:#dadada;"></div><div style="left:935px;top:280px;width:1px;height:23px;background:#dadada;"></div><div style="left:1060px;top:280px;width:1px;height:23px;background:#dadada;"></div><div style="left:1162px;top:280px;width:1px;height:23px;background:#dadada;"></div><div style="left:1276px;top:280px;width:1px;height:23px;background:#dadada;"></div><div style="left:1390px;top:280px;width:1px;height:23px;background:#dadada;"></div><div style="left:1459px;top:280px;width:1px;height:23px;background:#dadada;"></div><div style="left:1573px;top:280px;width:1px;height:23px;background:#dadada;"></div><div style="left:1687px;top:280px;width:1px;height:23px;background:#dadada;"></div><div style="left:1756px;top:280px;width:1px;height:23px;background:#dadada;"></div><div style="left:130px;top:304px;width:1740px;height:23px;background:#f4cccc;"></div><div style="left:130px;top:327px;width:1740px;height:1px;background:#dadada;"></div><div style="left:130px;top:306px;width:101px;height:19px;overflow:hidden"><div class="t" style="right:26px;top:2px;font-size:15px;line-height:17px;color:#cc0000;transform-origin:0 14px;font-weight:bold;">1</div></div><svg style="left:214px;top:313px" width="11" height="6"><path d="M0.5 0h10l-5 5.2z" fill="#cc3333"/></svg><div style="left:232px;top:306px;width:251px;height:19px;overflow:hidden"><div class="t" style="left:4px;top:2px;font-size:15px;line-height:17px;color:#cc0000;transform-origin:0 14px;font-weight:bold;">Branding Identity</div></div><div style="left:484px;top:306px;width:225px;height:19px;overflow:hidden"><div class="t" style="left:4px;top:2px;font-size:15px;line-height:17px;color:#cc0000;transform-origin:0 14px;font-weight:bold;">Logo Sketching</div></div><div style="left:710px;top:306px;width:225px;height:19px;overflow:hidden"><div class="t" style="left:4px;top:2px;font-size:15px;line-height:17px;color:#cc0000;transform-origin:0 14px;font-weight:bold;">Logo Sketching</div></div><div style="left:936px;top:306px;width:102px;height:19px;overflow:hidden"><div class="t" style="left:4px;top:2px;font-size:15px;line-height:17px;color:#cc0000;transform-origin:0 14px;font-weight:bold;">Designer 1</div></div><svg style="left:1043px;top:313px" width="11" height="6"><path d="M0.5 0h10l-5 5.2z" fill="#cc3333"/></svg><svg style="left:1067px;top:309px" width="15" height="15"><circle cx="7.5" cy="7.5" r="7.5" fill="url(#gb)"/></svg><div style="left:1086px;top:306px;width:54px;height:19px;overflow:hidden"><div class="t" style="left:3px;top:2px;font-size:15px;line-height:17px;color:#cc0000;transform-origin:0 14px;font-weight:bold;">P3 - Normal</div></div><svg style="left:1145px;top:313px" width="11" height="6"><path d="M0.5 0h10l-5 5.2z" fill="#cc3333"/></svg><div style="left:1163px;top:306px;width:113px;height:19px;overflow:hidden"><div class="t" style="right:3px;top:2px;font-size:15px;line-height:17px;color:#cc0000;transform-origin:0 14px;font-weight:bold;">9 Feb</div></div><div style="left:1277px;top:306px;width:113px;height:19px;overflow:hidden"><div class="t" style="right:3px;top:2px;font-size:15px;line-height:17px;color:#cc0000;transform-origin:0 14px;font-weight:bold;">3 Feb</div></div><div style="left:1391px;top:306px;width:68px;height:19px;overflow:hidden"><div class="t" style="right:3px;top:2px;font-size:15px;line-height:17px;color:#cc0000;transform-origin:0 14px;font-weight:bold;">-6</div></div><div style="left:1460px;top:306px;width:93px;height:19px;overflow:hidden"><div class="t" style="left:4px;top:2px;font-size:15px;line-height:17px;color:#cc0000;transform-origin:0 14px;font-weight:bold;">In Progress</div></div><svg style="left:1556px;top:313px" width="11" height="6"><path d="M0.5 0h10l-5 5.2z" fill="#cc3333"/></svg><div style="left:1688px;top:306px;width:68px;height:19px;overflow:hidden"><div class="t" style="right:26px;top:2px;font-size:15px;line-height:17px;color:#cc0000;transform-origin:0 14px;font-weight:bold;">90%</div></div><svg style="left:1739px;top:313px" width="11" height="6"><path d="M0.5 0h10l-5 5.2z" fill="#cc3333"/></svg><div style="left:1760px;top:306px;width:95px;height:19px;background:#6aa84f;"></div><div style="left:231px;top:304px;width:1px;height:23px;background:#dadada;"></div><div style="left:483px;top:304px;width:1px;height:23px;background:#dadada;"></div><div style="left:709px;top:304px;width:1px;height:23px;background:#dadada;"></div><div style="left:935px;top:304px;width:1px;height:23px;background:#dadada;"></div><div style="left:1060px;top:304px;width:1px;height:23px;background:#dadada;"></div><div style="left:1162px;top:304px;width:1px;height:23px;background:#dadada;"></div><div style="left:1276px;top:304px;width:1px;height:23px;background:#dadada;"></div><div style="left:1390px;top:304px;width:1px;height:23px;background:#dadada;"></div><div style="left:1459px;top:304px;width:1px;height:23px;background:#dadada;"></div><div style="left:1573px;top:304px;width:1px;height:23px;background:#dadada;"></div><div style="left:1687px;top:304px;width:1px;height:23px;background:#dadada;"></div><div style="left:1756px;top:304px;width:1px;height:23px;background:#dadada;"></div><div style="left:130px;top:328px;width:1740px;height:23px;background:#e0f2f1;"></div><div style="left:130px;top:351px;width:1740px;height:1px;background:#dadada;"></div><div style="left:130px;top:330px;width:101px;height:19px;overflow:hidden"><div class="t" style="right:26px;top:2px;font-size:15px;line-height:17px;color:#000000;transform-origin:0 14px;">1</div></div><svg style="left:214px;top:337px" width="11" height="6"><path d="M0.5 0h10l-5 5.2z" fill="#3d9a8f"/></svg><div style="left:232px;top:330px;width:251px;height:19px;overflow:hidden"><div class="t" style="left:4px;top:2px;font-size:15px;line-height:17px;color:#666666;transform-origin:0 14px;">Branding Identity</div></div><div style="left:484px;top:330px;width:225px;height:19px;overflow:hidden"><div class="t" style="left:4px;top:2px;font-size:15px;line-height:17px;color:#000000;transform-origin:0 14px;">Vectorizing &amp; Coloring</div></div><div style="left:710px;top:330px;width:225px;height:19px;overflow:hidden"><div class="t" style="left:4px;top:2px;font-size:15px;line-height:17px;color:#000000;transform-origin:0 14px;">Vectorizing &amp; Coloring</div></div><div style="left:936px;top:330px;width:102px;height:19px;overflow:hidden"><div class="t" style="left:4px;top:2px;font-size:15px;line-height:17px;color:#000000;transform-origin:0 14px;">Designer 2</div></div><svg style="left:1043px;top:337px" width="11" height="6"><path d="M0.5 0h10l-5 5.2z" fill="#3d9a8f"/></svg><svg style="left:1067px;top:333px" width="15" height="15"><circle cx="7.5" cy="7.5" r="7.5" fill="url(#gb)"/></svg><div style="left:1086px;top:330px;width:54px;height:19px;overflow:hidden"><div class="t" style="left:3px;top:2px;font-size:15px;line-height:17px;color:#000000;transform-origin:0 14px;">P3 - Normal</div></div><svg style="left:1145px;top:337px" width="11" height="6"><path d="M0.5 0h10l-5 5.2z" fill="#3d9a8f"/></svg><div style="left:1163px;top:330px;width:113px;height:19px;overflow:hidden"><div class="t" style="right:3px;top:2px;font-size:15px;line-height:17px;color:#000000;transform-origin:0 14px;">2 Feb</div></div><div style="left:1277px;top:330px;width:113px;height:19px;overflow:hidden"><div class="t" style="right:3px;top:2px;font-size:15px;line-height:17px;color:#000000;transform-origin:0 14px;">16 Feb</div></div><div style="left:1391px;top:330px;width:68px;height:19px;overflow:hidden"><div class="t" style="right:3px;top:2px;font-size:15px;line-height:17px;color:#000000;transform-origin:0 14px;">7</div></div><div style="left:1460px;top:330px;width:93px;height:19px;overflow:hidden"><div class="t" style="left:4px;top:2px;font-size:15px;line-height:17px;color:#000000;transform-origin:0 14px;">In Progress</div></div><svg style="left:1556px;top:337px" width="11" height="6"><path d="M0.5 0h10l-5 5.2z" fill="#3d9a8f"/></svg><div style="left:1688px;top:330px;width:68px;height:19px;overflow:hidden"><div class="t" style="right:26px;top:2px;font-size:15px;line-height:17px;color:#000000;transform-origin:0 14px;">75%</div></div><svg style="left:1739px;top:337px" width="11" height="6"><path d="M0.5 0h10l-5 5.2z" fill="#3d9a8f"/></svg><div style="left:1760px;top:330px;width:80px;height:19px;background:#6aa84f;"></div><div style="left:231px;top:328px;width:1px;height:23px;background:#dadada;"></div><div style="left:483px;top:328px;width:1px;height:23px;background:#dadada;"></div><div style="left:709px;top:328px;width:1px;height:23px;background:#dadada;"></div><div style="left:935px;top:328px;width:1px;height:23px;background:#dadada;"></div><div style="left:1060px;top:328px;width:1px;height:23px;background:#dadada;"></div><div style="left:1162px;top:328px;width:1px;height:23px;background:#dadada;"></div><div style="left:1276px;top:328px;width:1px;height:23px;background:#dadada;"></div><div style="left:1390px;top:328px;width:1px;height:23px;background:#dadada;"></div><div style="left:1459px;top:328px;width:1px;height:23px;background:#dadada;"></div><div style="left:1573px;top:328px;width:1px;height:23px;background:#dadada;"></div><div style="left:1687px;top:328px;width:1px;height:23px;background:#dadada;"></div><div style="left:1756px;top:328px;width:1px;height:23px;background:#dadada;"></div><div style="left:130px;top:352px;width:1740px;height:23px;background:#ffffff;"></div><div style="left:130px;top:375px;width:1740px;height:1px;background:#dadada;"></div><div style="left:130px;top:354px;width:101px;height:19px;overflow:hidden"><div class="t" style="right:26px;top:2px;font-size:15px;line-height:17px;color:#000000;transform-origin:0 14px;">1</div></div><svg style="left:214px;top:361px" width="11" height="6"><path d="M0.5 0h10l-5 5.2z" fill="#8a8a8a"/></svg><div style="left:232px;top:354px;width:251px;height:19px;overflow:hidden"><div class="t" style="left:4px;top:2px;font-size:15px;line-height:17px;color:#666666;transform-origin:0 14px;">Branding Identity</div></div><div style="left:484px;top:354px;width:225px;height:19px;overflow:hidden"><div class="t" style="left:4px;top:2px;font-size:15px;line-height:17px;color:#000000;transform-origin:0 14px;">Mockup Implementation</div></div><div style="left:710px;top:354px;width:225px;height:19px;overflow:hidden"><div class="t" style="left:4px;top:2px;font-size:15px;line-height:17px;color:#000000;transform-origin:0 14px;">Mockup Implementation</div></div><div style="left:936px;top:354px;width:102px;height:19px;overflow:hidden"><div class="t" style="left:4px;top:2px;font-size:15px;line-height:17px;color:#000000;transform-origin:0 14px;">Designer 2</div></div><svg style="left:1043px;top:361px" width="11" height="6"><path d="M0.5 0h10l-5 5.2z" fill="#8a8a8a"/></svg><svg style="left:1067px;top:357px" width="15" height="15"><circle cx="7.5" cy="7.5" r="7.5" fill="url(#gb)"/></svg><div style="left:1086px;top:354px;width:54px;height:19px;overflow:hidden"><div class="t" style="left:3px;top:2px;font-size:15px;line-height:17px;color:#000000;transform-origin:0 14px;">P3 - Normal</div></div><svg style="left:1145px;top:361px" width="11" height="6"><path d="M0.5 0h10l-5 5.2z" fill="#8a8a8a"/></svg><div style="left:1163px;top:354px;width:113px;height:19px;overflow:hidden"><div class="t" style="right:3px;top:2px;font-size:15px;line-height:17px;color:#000000;transform-origin:0 14px;">9 Feb</div></div><div style="left:1277px;top:354px;width:113px;height:19px;overflow:hidden"><div class="t" style="right:3px;top:2px;font-size:15px;line-height:17px;color:#000000;transform-origin:0 14px;">18 Feb</div></div><div style="left:1391px;top:354px;width:68px;height:19px;overflow:hidden"><div class="t" style="right:3px;top:2px;font-size:15px;line-height:17px;color:#000000;transform-origin:0 14px;">9</div></div><div style="left:1460px;top:354px;width:93px;height:19px;overflow:hidden"><div class="t" style="left:4px;top:2px;font-size:15px;line-height:17px;color:#000000;transform-origin:0 14px;">In Progress</div></div><svg style="left:1556px;top:361px" width="11" height="6"><path d="M0.5 0h10l-5 5.2z" fill="#8a8a8a"/></svg><div style="left:1688px;top:354px;width:68px;height:19px;overflow:hidden"><div class="t" style="right:26px;top:2px;font-size:15px;line-height:17px;color:#000000;transform-origin:0 14px;">75%</div></div><svg style="left:1739px;top:361px" width="11" height="6"><path d="M0.5 0h10l-5 5.2z" fill="#8a8a8a"/></svg><div style="left:1760px;top:354px;width:80px;height:19px;background:#6aa84f;"></div><div style="left:231px;top:352px;width:1px;height:23px;background:#dadada;"></div><div style="left:483px;top:352px;width:1px;height:23px;background:#dadada;"></div><div style="left:709px;top:352px;width:1px;height:23px;background:#dadada;"></div><div style="left:935px;top:352px;width:1px;height:23px;background:#dadada;"></div><div style="left:1060px;top:352px;width:1px;height:23px;background:#dadada;"></div><div style="left:1162px;top:352px;width:1px;height:23px;background:#dadada;"></div><div style="left:1276px;top:352px;width:1px;height:23px;background:#dadada;"></div><div style="left:1390px;top:352px;width:1px;height:23px;background:#dadada;"></div><div style="left:1459px;top:352px;width:1px;height:23px;background:#dadada;"></div><div style="left:1573px;top:352px;width:1px;height:23px;background:#dadada;"></div><div style="left:1687px;top:352px;width:1px;height:23px;background:#dadada;"></div><div style="left:1756px;top:352px;width:1px;height:23px;background:#dadada;"></div><div style="left:130px;top:376px;width:1740px;height:23px;background:#e0f2f1;"></div><div style="left:130px;top:399px;width:1740px;height:1px;background:#dadada;"></div><div style="left:130px;top:378px;width:101px;height:19px;overflow:hidden"><div class="t" style="right:26px;top:2px;font-size:15px;line-height:17px;color:#000000;transform-origin:0 14px;">2</div></div><svg style="left:214px;top:385px" width="11" height="6"><path d="M0.5 0h10l-5 5.2z" fill="#3d9a8f"/></svg><div style="left:232px;top:378px;width:251px;height:19px;overflow:hidden"><div class="t" style="left:4px;top:2px;font-size:15px;line-height:17px;color:#666666;transform-origin:0 14px;">Social Media Mgt</div></div><div style="left:484px;top:378px;width:225px;height:19px;overflow:hidden"><div class="t" style="left:4px;top:2px;font-size:15px;line-height:17px;color:#000000;transform-origin:0 14px;">Content Pillar Strategy</div></div><div style="left:710px;top:378px;width:225px;height:19px;overflow:hidden"><div class="t" style="left:4px;top:2px;font-size:15px;line-height:17px;color:#000000;transform-origin:0 14px;">Content Pillar Strategy</div></div><div style="left:936px;top:378px;width:102px;height:19px;overflow:hidden"><div class="t" style="left:4px;top:2px;font-size:15px;line-height:17px;color:#000000;transform-origin:0 14px;">Copywriter</div></div><svg style="left:1043px;top:385px" width="11" height="6"><path d="M0.5 0h10l-5 5.2z" fill="#3d9a8f"/></svg><svg style="left:1067px;top:381px" width="15" height="15"><circle cx="7.5" cy="7.5" r="7.5" fill="url(#gb)"/></svg><div style="left:1086px;top:378px;width:54px;height:19px;overflow:hidden"><div class="t" style="left:3px;top:2px;font-size:15px;line-height:17px;color:#000000;transform-origin:0 14px;">P3 - Normal</div></div><svg style="left:1145px;top:385px" width="11" height="6"><path d="M0.5 0h10l-5 5.2z" fill="#3d9a8f"/></svg><div style="left:1163px;top:378px;width:113px;height:19px;overflow:hidden"><div class="t" style="right:3px;top:2px;font-size:15px;line-height:17px;color:#000000;transform-origin:0 14px;">2 Feb</div></div><div style="left:1277px;top:378px;width:113px;height:19px;overflow:hidden"><div class="t" style="right:3px;top:2px;font-size:15px;line-height:17px;color:#000000;transform-origin:0 14px;">16 Feb</div></div><div style="left:1391px;top:378px;width:68px;height:19px;overflow:hidden"><div class="t" style="right:3px;top:2px;font-size:15px;line-height:17px;color:#000000;transform-origin:0 14px;">7</div></div><div style="left:1460px;top:378px;width:93px;height:19px;overflow:hidden"><div class="t" style="left:4px;top:2px;font-size:15px;line-height:17px;color:#000000;transform-origin:0 14px;">In Progress</div></div><svg style="left:1556px;top:385px" width="11" height="6"><path d="M0.5 0h10l-5 5.2z" fill="#3d9a8f"/></svg><div style="left:1688px;top:378px;width:68px;height:19px;overflow:hidden"><div class="t" style="right:26px;top:2px;font-size:15px;line-height:17px;color:#000000;transform-origin:0 14px;">75%</div></div><svg style="left:1739px;top:385px" width="11" height="6"><path d="M0.5 0h10l-5 5.2z" fill="#3d9a8f"/></svg><div style="left:1760px;top:378px;width:80px;height:19px;background:#6aa84f;"></div><div style="left:231px;top:376px;width:1px;height:23px;background:#dadada;"></div><div style="left:483px;top:376px;width:1px;height:23px;background:#dadada;"></div><div style="left:709px;top:376px;width:1px;height:23px;background:#dadada;"></div><div style="left:935px;top:376px;width:1px;height:23px;background:#dadada;"></div><div style="left:1060px;top:376px;width:1px;height:23px;background:#dadada;"></div><div style="left:1162px;top:376px;width:1px;height:23px;background:#dadada;"></div><div style="left:1276px;top:376px;width:1px;height:23px;background:#dadada;"></div><div style="left:1390px;top:376px;width:1px;height:23px;background:#dadada;"></div><div style="left:1459px;top:376px;width:1px;height:23px;background:#dadada;"></div><div style="left:1573px;top:376px;width:1px;height:23px;background:#dadada;"></div><div style="left:1687px;top:376px;width:1px;height:23px;background:#dadada;"></div><div style="left:1756px;top:376px;width:1px;height:23px;background:#dadada;"></div><div style="left:130px;top:400px;width:1740px;height:23px;background:#ffffff;"></div><div style="left:130px;top:423px;width:1740px;height:1px;background:#dadada;"></div><div style="left:130px;top:402px;width:101px;height:19px;overflow:hidden"><div class="t" style="right:26px;top:2px;font-size:15px;line-height:17px;color:#000000;transform-origin:0 14px;">2</div></div><svg style="left:214px;top:409px" width="11" height="6"><path d="M0.5 0h10l-5 5.2z" fill="#8a8a8a"/></svg><div style="left:232px;top:402px;width:251px;height:19px;overflow:hidden"><div class="t" style="left:4px;top:2px;font-size:15px;line-height:17px;color:#666666;transform-origin:0 14px;">Social Media Mgt</div></div><div style="left:484px;top:402px;width:225px;height:19px;overflow:hidden"><div class="t" style="left:4px;top:2px;font-size:15px;line-height:17px;color:#000000;transform-origin:0 14px;">Copywriting Weekly</div></div><div style="left:710px;top:402px;width:225px;height:19px;overflow:hidden"><div class="t" style="left:4px;top:2px;font-size:15px;line-height:17px;color:#000000;transform-origin:0 14px;">Copywriting Weekly</div></div><div style="left:936px;top:402px;width:102px;height:19px;overflow:hidden"><div class="t" style="left:4px;top:2px;font-size:15px;line-height:17px;color:#000000;transform-origin:0 14px;">Copywriter</div></div><svg style="left:1043px;top:409px" width="11" height="6"><path d="M0.5 0h10l-5 5.2z" fill="#8a8a8a"/></svg><svg style="left:1067px;top:405px" width="15" height="15"><circle cx="7.5" cy="7.5" r="7.5" fill="url(#gb)"/></svg><div style="left:1086px;top:402px;width:54px;height:19px;overflow:hidden"><div class="t" style="left:3px;top:2px;font-size:15px;line-height:17px;color:#000000;transform-origin:0 14px;">P3 - Normal</div></div><svg style="left:1145px;top:409px" width="11" height="6"><path d="M0.5 0h10l-5 5.2z" fill="#8a8a8a"/></svg><div style="left:1163px;top:402px;width:113px;height:19px;overflow:hidden"><div class="t" style="right:3px;top:2px;font-size:15px;line-height:17px;color:#000000;transform-origin:0 14px;">2 Feb</div></div><div style="left:1277px;top:402px;width:113px;height:19px;overflow:hidden"><div class="t" style="right:3px;top:2px;font-size:15px;line-height:17px;color:#000000;transform-origin:0 14px;">16 Feb</div></div><div style="left:1391px;top:402px;width:68px;height:19px;overflow:hidden"><div class="t" style="right:3px;top:2px;font-size:15px;line-height:17px;color:#000000;transform-origin:0 14px;">7</div></div><div style="left:1460px;top:402px;width:93px;height:19px;overflow:hidden"><div class="t" style="left:4px;top:2px;font-size:15px;line-height:17px;color:#000000;transform-origin:0 14px;">In Progress</div></div><svg style="left:1556px;top:409px" width="11" height="6"><path d="M0.5 0h10l-5 5.2z" fill="#8a8a8a"/></svg><div style="left:1688px;top:402px;width:68px;height:19px;overflow:hidden"><div class="t" style="right:26px;top:2px;font-size:15px;line-height:17px;color:#000000;transform-origin:0 14px;">75%</div></div><svg style="left:1739px;top:409px" width="11" height="6"><path d="M0.5 0h10l-5 5.2z" fill="#8a8a8a"/></svg><div style="left:1760px;top:402px;width:80px;height:19px;background:#6aa84f;"></div><div style="left:231px;top:400px;width:1px;height:23px;background:#dadada;"></div><div style="left:483px;top:400px;width:1px;height:23px;background:#dadada;"></div><div style="left:709px;top:400px;width:1px;height:23px;background:#dadada;"></div><div style="left:935px;top:400px;width:1px;height:23px;background:#dadada;"></div><div style="left:1060px;top:400px;width:1px;height:23px;background:#dadada;"></div><div style="left:1162px;top:400px;width:1px;height:23px;background:#dadada;"></div><div style="left:1276px;top:400px;width:1px;height:23px;background:#dadada;"></div><div style="left:1390px;top:400px;width:1px;height:23px;background:#dadada;"></div><div style="left:1459px;top:400px;width:1px;height:23px;background:#dadada;"></div><div style="left:1573px;top:400px;width:1px;height:23px;background:#dadada;"></div><div style="left:1687px;top:400px;width:1px;height:23px;background:#dadada;"></div><div style="left:1756px;top:400px;width:1px;height:23px;background:#dadada;"></div><div style="left:130px;top:424px;width:1740px;height:23px;background:#e0f2f1;"></div><div style="left:130px;top:447px;width:1740px;height:1px;background:#dadada;"></div><div style="left:130px;top:426px;width:101px;height:19px;overflow:hidden"><div class="t" style="right:26px;top:2px;font-size:15px;line-height:17px;color:#000000;transform-origin:0 14px;">2</div></div><svg style="left:214px;top:433px" width="11" height="6"><path d="M0.5 0h10l-5 5.2z" fill="#3d9a8f"/></svg><div style="left:232px;top:426px;width:251px;height:19px;overflow:hidden"><div class="t" style="left:4px;top:2px;font-size:15px;line-height:17px;color:#666666;transform-origin:0 14px;">Social Media Mgt</div></div><div style="left:484px;top:426px;width:225px;height:19px;overflow:hidden"><div class="t" style="left:4px;top:2px;font-size:15px;line-height:17px;color:#000000;transform-origin:0 14px;">Visual Design Feeds</div></div><div style="left:710px;top:426px;width:225px;height:19px;overflow:hidden"><div class="t" style="left:4px;top:2px;font-size:15px;line-height:17px;color:#000000;transform-origin:0 14px;">Visual Design Feeds</div></div><div style="left:936px;top:426px;width:102px;height:19px;overflow:hidden"><div class="t" style="left:4px;top:2px;font-size:15px;line-height:17px;color:#000000;transform-origin:0 14px;">Copywriter</div></div><svg style="left:1043px;top:433px" width="11" height="6"><path d="M0.5 0h10l-5 5.2z" fill="#3d9a8f"/></svg><svg style="left:1067px;top:429px" width="15" height="15"><circle cx="7.5" cy="7.5" r="7.5" fill="url(#gb)"/></svg><div style="left:1086px;top:426px;width:54px;height:19px;overflow:hidden"><div class="t" style="left:3px;top:2px;font-size:15px;line-height:17px;color:#000000;transform-origin:0 14px;">P3 - Normal</div></div><svg style="left:1145px;top:433px" width="11" height="6"><path d="M0.5 0h10l-5 5.2z" fill="#3d9a8f"/></svg><div style="left:1163px;top:426px;width:113px;height:19px;overflow:hidden"><div class="t" style="right:3px;top:2px;font-size:15px;line-height:17px;color:#000000;transform-origin:0 14px;">2 Feb</div></div><div style="left:1277px;top:426px;width:113px;height:19px;overflow:hidden"><div class="t" style="right:3px;top:2px;font-size:15px;line-height:17px;color:#000000;transform-origin:0 14px;">26 Feb</div></div><div style="left:1391px;top:426px;width:68px;height:19px;overflow:hidden"><div class="t" style="right:3px;top:2px;font-size:15px;line-height:17px;color:#000000;transform-origin:0 14px;">17</div></div><div style="left:1460px;top:426px;width:93px;height:19px;overflow:hidden"><div class="t" style="left:4px;top:2px;font-size:15px;line-height:17px;color:#000000;transform-origin:0 14px;">In Progress</div></div><svg style="left:1556px;top:433px" width="11" height="6"><path d="M0.5 0h10l-5 5.2z" fill="#3d9a8f"/></svg><div style="left:1688px;top:426px;width:68px;height:19px;overflow:hidden"><div class="t" style="right:26px;top:2px;font-size:15px;line-height:17px;color:#000000;transform-origin:0 14px;">75%</div></div><svg style="left:1739px;top:433px" width="11" height="6"><path d="M0.5 0h10l-5 5.2z" fill="#3d9a8f"/></svg><div style="left:1760px;top:426px;width:80px;height:19px;background:#6aa84f;"></div><div style="left:231px;top:424px;width:1px;height:23px;background:#dadada;"></div><div style="left:483px;top:424px;width:1px;height:23px;background:#dadada;"></div><div style="left:709px;top:424px;width:1px;height:23px;background:#dadada;"></div><div style="left:935px;top:424px;width:1px;height:23px;background:#dadada;"></div><div style="left:1060px;top:424px;width:1px;height:23px;background:#dadada;"></div><div style="left:1162px;top:424px;width:1px;height:23px;background:#dadada;"></div><div style="left:1276px;top:424px;width:1px;height:23px;background:#dadada;"></div><div style="left:1390px;top:424px;width:1px;height:23px;background:#dadada;"></div><div style="left:1459px;top:424px;width:1px;height:23px;background:#dadada;"></div><div style="left:1573px;top:424px;width:1px;height:23px;background:#dadada;"></div><div style="left:1687px;top:424px;width:1px;height:23px;background:#dadada;"></div><div style="left:1756px;top:424px;width:1px;height:23px;background:#dadada;"></div><div style="left:130px;top:448px;width:1740px;height:23px;background:#ffffff;"></div><div style="left:130px;top:471px;width:1740px;height:1px;background:#dadada;"></div><div style="left:130px;top:450px;width:101px;height:19px;overflow:hidden"><div class="t" style="right:26px;top:2px;font-size:15px;line-height:17px;color:#000000;transform-origin:0 14px;">2</div></div><svg style="left:214px;top:457px" width="11" height="6"><path d="M0.5 0h10l-5 5.2z" fill="#8a8a8a"/></svg><div style="left:232px;top:450px;width:251px;height:19px;overflow:hidden"><div class="t" style="left:4px;top:2px;font-size:15px;line-height:17px;color:#666666;transform-origin:0 14px;">Social Media Mgt</div></div><div style="left:484px;top:450px;width:225px;height:19px;overflow:hidden"><div class="t" style="left:4px;top:2px;font-size:15px;line-height:17px;color:#000000;transform-origin:0 14px;">Scheduling &amp; Posting</div></div><div style="left:710px;top:450px;width:225px;height:19px;overflow:hidden"><div class="t" style="left:4px;top:2px;font-size:15px;line-height:17px;color:#000000;transform-origin:0 14px;">Scheduling &amp; Posting</div></div><div style="left:936px;top:450px;width:102px;height:19px;overflow:hidden"><div class="t" style="left:4px;top:2px;font-size:15px;line-height:17px;color:#000000;transform-origin:0 14px;">Copywriter</div></div><svg style="left:1043px;top:457px" width="11" height="6"><path d="M0.5 0h10l-5 5.2z" fill="#8a8a8a"/></svg><svg style="left:1067px;top:453px" width="15" height="15"><circle cx="7.5" cy="7.5" r="7.5" fill="url(#gb)"/></svg><div style="left:1086px;top:450px;width:54px;height:19px;overflow:hidden"><div class="t" style="left:3px;top:2px;font-size:15px;line-height:17px;color:#000000;transform-origin:0 14px;">P3 - Normal</div></div><svg style="left:1145px;top:457px" width="11" height="6"><path d="M0.5 0h10l-5 5.2z" fill="#8a8a8a"/></svg><div style="left:1163px;top:450px;width:113px;height:19px;overflow:hidden"><div class="t" style="right:3px;top:2px;font-size:15px;line-height:17px;color:#000000;transform-origin:0 14px;">2 Feb</div></div><div style="left:1277px;top:450px;width:113px;height:19px;overflow:hidden"><div class="t" style="right:3px;top:2px;font-size:15px;line-height:17px;color:#000000;transform-origin:0 14px;">16 Feb</div></div><div style="left:1391px;top:450px;width:68px;height:19px;overflow:hidden"><div class="t" style="right:3px;top:2px;font-size:15px;line-height:17px;color:#000000;transform-origin:0 14px;">7</div></div><div style="left:1460px;top:450px;width:93px;height:19px;overflow:hidden"><div class="t" style="left:4px;top:2px;font-size:15px;line-height:17px;color:#000000;transform-origin:0 14px;">In Progress</div></div><svg style="left:1556px;top:457px" width="11" height="6"><path d="M0.5 0h10l-5 5.2z" fill="#8a8a8a"/></svg><div style="left:1688px;top:450px;width:68px;height:19px;overflow:hidden"><div class="t" style="right:26px;top:2px;font-size:15px;line-height:17px;color:#000000;transform-origin:0 14px;">75%</div></div><svg style="left:1739px;top:457px" width="11" height="6"><path d="M0.5 0h10l-5 5.2z" fill="#8a8a8a"/></svg><div style="left:1760px;top:450px;width:80px;height:19px;background:#6aa84f;"></div><div style="left:231px;top:448px;width:1px;height:23px;background:#dadada;"></div><div style="left:483px;top:448px;width:1px;height:23px;background:#dadada;"></div><div style="left:709px;top:448px;width:1px;height:23px;background:#dadada;"></div><div style="left:935px;top:448px;width:1px;height:23px;background:#dadada;"></div><div style="left:1060px;top:448px;width:1px;height:23px;background:#dadada;"></div><div style="left:1162px;top:448px;width:1px;height:23px;background:#dadada;"></div><div style="left:1276px;top:448px;width:1px;height:23px;background:#dadada;"></div><div style="left:1390px;top:448px;width:1px;height:23px;background:#dadada;"></div><div style="left:1459px;top:448px;width:1px;height:23px;background:#dadada;"></div><div style="left:1573px;top:448px;width:1px;height:23px;background:#dadada;"></div><div style="left:1687px;top:448px;width:1px;height:23px;background:#dadada;"></div><div style="left:1756px;top:448px;width:1px;height:23px;background:#dadada;"></div><div style="left:130px;top:472px;width:1740px;height:23px;background:#e0f2f1;"></div><div style="left:130px;top:495px;width:1740px;height:1px;background:#dadada;"></div><div style="left:130px;top:474px;width:101px;height:19px;overflow:hidden"><div class="t" style="right:26px;top:2px;font-size:15px;line-height:17px;color:#000000;transform-origin:0 14px;">3</div></div><svg style="left:214px;top:481px" width="11" height="6"><path d="M0.5 0h10l-5 5.2z" fill="#3d9a8f"/></svg><div style="left:232px;top:474px;width:251px;height:19px;overflow:hidden"><div class="t" style="left:4px;top:2px;font-size:15px;line-height:17px;color:#666666;transform-origin:0 14px;">Web Development</div></div><div style="left:484px;top:474px;width:225px;height:19px;overflow:hidden"><div class="t" style="left:4px;top:2px;font-size:15px;line-height:17px;color:#000000;transform-origin:0 14px;">Requirement Gathering</div></div><div style="left:710px;top:474px;width:225px;height:19px;overflow:hidden"><div class="t" style="left:4px;top:2px;font-size:15px;line-height:17px;color:#000000;transform-origin:0 14px;">Requirement Gathering</div></div><div style="left:936px;top:474px;width:102px;height:19px;overflow:hidden"><div class="t" style="left:4px;top:2px;font-size:15px;line-height:17px;color:#000000;transform-origin:0 14px;">Developer</div></div><svg style="left:1043px;top:481px" width="11" height="6"><path d="M0.5 0h10l-5 5.2z" fill="#3d9a8f"/></svg><svg style="left:1067px;top:477px" width="15" height="15"><circle cx="7.5" cy="7.5" r="7.5" fill="url(#go)"/></svg><div style="left:1086px;top:474px;width:54px;height:19px;overflow:hidden"><div class="t" style="left:3px;top:2px;font-size:15px;line-height:17px;color:#000000;transform-origin:0 14px;">P2 - High</div></div><svg style="left:1145px;top:481px" width="11" height="6"><path d="M0.5 0h10l-5 5.2z" fill="#3d9a8f"/></svg><div style="left:1163px;top:474px;width:113px;height:19px;overflow:hidden"><div class="t" style="right:3px;top:2px;font-size:15px;line-height:17px;color:#000000;transform-origin:0 14px;">2 Feb</div></div><div style="left:1277px;top:474px;width:113px;height:19px;overflow:hidden"><div class="t" style="right:3px;top:2px;font-size:15px;line-height:17px;color:#000000;transform-origin:0 14px;">16 Feb</div></div><div style="left:1391px;top:474px;width:68px;height:19px;overflow:hidden"><div class="t" style="right:3px;top:2px;font-size:15px;line-height:17px;color:#000000;transform-origin:0 14px;">7</div></div><div style="left:1460px;top:474px;width:93px;height:19px;overflow:hidden"><div class="t" style="left:4px;top:2px;font-size:15px;line-height:17px;color:#000000;transform-origin:0 14px;">In Progress</div></div><svg style="left:1556px;top:481px" width="11" height="6"><path d="M0.5 0h10l-5 5.2z" fill="#3d9a8f"/></svg><div style="left:1688px;top:474px;width:68px;height:19px;overflow:hidden"><div class="t" style="right:26px;top:2px;font-size:15px;line-height:17px;color:#000000;transform-origin:0 14px;">50%</div></div><svg style="left:1739px;top:481px" width="11" height="6"><path d="M0.5 0h10l-5 5.2z" fill="#3d9a8f"/></svg><div style="left:1760px;top:474px;width:53px;height:19px;background:#6aa84f;"></div><div style="left:231px;top:472px;width:1px;height:23px;background:#dadada;"></div><div style="left:483px;top:472px;width:1px;height:23px;background:#dadada;"></div><div style="left:709px;top:472px;width:1px;height:23px;background:#dadada;"></div><div style="left:935px;top:472px;width:1px;height:23px;background:#dadada;"></div><div style="left:1060px;top:472px;width:1px;height:23px;background:#dadada;"></div><div style="left:1162px;top:472px;width:1px;height:23px;background:#dadada;"></div><div style="left:1276px;top:472px;width:1px;height:23px;background:#dadada;"></div><div style="left:1390px;top:472px;width:1px;height:23px;background:#dadada;"></div><div style="left:1459px;top:472px;width:1px;height:23px;background:#dadada;"></div><div style="left:1573px;top:472px;width:1px;height:23px;background:#dadada;"></div><div style="left:1687px;top:472px;width:1px;height:23px;background:#dadada;"></div><div style="left:1756px;top:472px;width:1px;height:23px;background:#dadada;"></div><div style="left:130px;top:496px;width:1740px;height:23px;background:#ffffff;"></div><div style="left:130px;top:519px;width:1740px;height:1px;background:#dadada;"></div><div style="left:130px;top:498px;width:101px;height:19px;overflow:hidden"><div class="t" style="right:26px;top:2px;font-size:15px;line-height:17px;color:#000000;transform-origin:0 14px;">3</div></div><svg style="left:214px;top:505px" width="11" height="6"><path d="M0.5 0h10l-5 5.2z" fill="#8a8a8a"/></svg><div style="left:232px;top:498px;width:251px;height:19px;overflow:hidden"><div class="t" style="left:4px;top:2px;font-size:15px;line-height:17px;color:#666666;transform-origin:0 14px;">Web Development</div></div><div style="left:484px;top:498px;width:225px;height:19px;overflow:hidden"><div class="t" style="left:4px;top:2px;font-size:15px;line-height:17px;color:#000000;transform-origin:0 14px;">Sitemap &amp; Wireframe</div></div><div style="left:710px;top:498px;width:225px;height:19px;overflow:hidden"><div class="t" style="left:4px;top:2px;font-size:15px;line-height:17px;color:#000000;transform-origin:0 14px;">Sitemap &amp; Wireframe</div></div><div style="left:936px;top:498px;width:102px;height:19px;overflow:hidden"><div class="t" style="left:4px;top:2px;font-size:15px;line-height:17px;color:#000000;transform-origin:0 14px;">Developer</div></div><svg style="left:1043px;top:505px" width="11" height="6"><path d="M0.5 0h10l-5 5.2z" fill="#8a8a8a"/></svg><svg style="left:1067px;top:501px" width="15" height="15"><circle cx="7.5" cy="7.5" r="7.5" fill="url(#go)"/></svg><div style="left:1086px;top:498px;width:54px;height:19px;overflow:hidden"><div class="t" style="left:3px;top:2px;font-size:15px;line-height:17px;color:#000000;transform-origin:0 14px;">P2 - High</div></div><svg style="left:1145px;top:505px" width="11" height="6"><path d="M0.5 0h10l-5 5.2z" fill="#8a8a8a"/></svg><div style="left:1163px;top:498px;width:113px;height:19px;overflow:hidden"><div class="t" style="right:3px;top:2px;font-size:15px;line-height:17px;color:#000000;transform-origin:0 14px;">2 Feb</div></div><div style="left:1277px;top:498px;width:113px;height:19px;overflow:hidden"><div class="t" style="right:3px;top:2px;font-size:15px;line-height:17px;color:#000000;transform-origin:0 14px;">16 Feb</div></div><div style="left:1391px;top:498px;width:68px;height:19px;overflow:hidden"><div class="t" style="right:3px;top:2px;font-size:15px;line-height:17px;color:#000000;transform-origin:0 14px;">7</div></div><div style="left:1460px;top:498px;width:93px;height:19px;overflow:hidden"><div class="t" style="left:4px;top:2px;font-size:15px;line-height:17px;color:#000000;transform-origin:0 14px;">In Progress</div></div><svg style="left:1556px;top:505px" width="11" height="6"><path d="M0.5 0h10l-5 5.2z" fill="#8a8a8a"/></svg><div style="left:1688px;top:498px;width:68px;height:19px;overflow:hidden"><div class="t" style="right:26px;top:2px;font-size:15px;line-height:17px;color:#000000;transform-origin:0 14px;">50%</div></div><svg style="left:1739px;top:505px" width="11" height="6"><path d="M0.5 0h10l-5 5.2z" fill="#8a8a8a"/></svg><div style="left:1760px;top:498px;width:53px;height:19px;background:#6aa84f;"></div><div style="left:231px;top:496px;width:1px;height:23px;background:#dadada;"></div><div style="left:483px;top:496px;width:1px;height:23px;background:#dadada;"></div><div style="left:709px;top:496px;width:1px;height:23px;background:#dadada;"></div><div style="left:935px;top:496px;width:1px;height:23px;background:#dadada;"></div><div style="left:1060px;top:496px;width:1px;height:23px;background:#dadada;"></div><div style="left:1162px;top:496px;width:1px;height:23px;background:#dadada;"></div><div style="left:1276px;top:496px;width:1px;height:23px;background:#dadada;"></div><div style="left:1390px;top:496px;width:1px;height:23px;background:#dadada;"></div><div style="left:1459px;top:496px;width:1px;height:23px;background:#dadada;"></div><div style="left:1573px;top:496px;width:1px;height:23px;background:#dadada;"></div><div style="left:1687px;top:496px;width:1px;height:23px;background:#dadada;"></div><div style="left:1756px;top:496px;width:1px;height:23px;background:#dadada;"></div><div style="left:130px;top:520px;width:1740px;height:23px;background:#e0f2f1;"></div><div style="left:130px;top:543px;width:1740px;height:1px;background:#dadada;"></div><div style="left:130px;top:522px;width:101px;height:19px;overflow:hidden"><div class="t" style="right:26px;top:2px;font-size:15px;line-height:17px;color:#000000;transform-origin:0 14px;">3</div></div><svg style="left:214px;top:529px" width="11" height="6"><path d="M0.5 0h10l-5 5.2z" fill="#3d9a8f"/></svg><div style="left:232px;top:522px;width:251px;height:19px;overflow:hidden"><div class="t" style="left:4px;top:2px;font-size:15px;line-height:17px;color:#666666;transform-origin:0 14px;">Web Development</div></div><div style="left:484px;top:522px;width:225px;height:19px;overflow:hidden"><div class="t" style="left:4px;top:2px;font-size:15px;line-height:17px;color:#000000;transform-origin:0 14px;">UI Design Handoff</div></div><div style="left:710px;top:522px;width:225px;height:19px;overflow:hidden"><div class="t" style="left:4px;top:2px;font-size:15px;line-height:17px;color:#000000;transform-origin:0 14px;">UI Design Handoff</div></div><div style="left:936px;top:522px;width:102px;height:19px;overflow:hidden"><div class="t" style="left:4px;top:2px;font-size:15px;line-height:17px;color:#000000;transform-origin:0 14px;">Developer</div></div><svg style="left:1043px;top:529px" width="11" height="6"><path d="M0.5 0h10l-5 5.2z" fill="#3d9a8f"/></svg><svg style="left:1067px;top:525px" width="15" height="15"><circle cx="7.5" cy="7.5" r="7.5" fill="url(#go)"/></svg><div style="left:1086px;top:522px;width:54px;height:19px;overflow:hidden"><div class="t" style="left:3px;top:2px;font-size:15px;line-height:17px;color:#000000;transform-origin:0 14px;">P2 - High</div></div><svg style="left:1145px;top:529px" width="11" height="6"><path d="M0.5 0h10l-5 5.2z" fill="#3d9a8f"/></svg><div style="left:1163px;top:522px;width:113px;height:19px;overflow:hidden"><div class="t" style="right:3px;top:2px;font-size:15px;line-height:17px;color:#000000;transform-origin:0 14px;">4 Feb</div></div><div style="left:1277px;top:522px;width:113px;height:19px;overflow:hidden"><div class="t" style="right:3px;top:2px;font-size:15px;line-height:17px;color:#000000;transform-origin:0 14px;">16 Feb</div></div><div style="left:1391px;top:522px;width:68px;height:19px;overflow:hidden"><div class="t" style="right:3px;top:2px;font-size:15px;line-height:17px;color:#000000;transform-origin:0 14px;">7</div></div><div style="left:1460px;top:522px;width:93px;height:19px;overflow:hidden"><div class="t" style="left:4px;top:2px;font-size:15px;line-height:17px;color:#000000;transform-origin:0 14px;">In Progress</div></div><svg style="left:1556px;top:529px" width="11" height="6"><path d="M0.5 0h10l-5 5.2z" fill="#3d9a8f"/></svg><div style="left:1688px;top:522px;width:68px;height:19px;overflow:hidden"><div class="t" style="right:26px;top:2px;font-size:15px;line-height:17px;color:#000000;transform-origin:0 14px;">50%</div></div><svg style="left:1739px;top:529px" width="11" height="6"><path d="M0.5 0h10l-5 5.2z" fill="#3d9a8f"/></svg><div style="left:1760px;top:522px;width:53px;height:19px;background:#6aa84f;"></div><div style="left:231px;top:520px;width:1px;height:23px;background:#dadada;"></div><div style="left:483px;top:520px;width:1px;height:23px;background:#dadada;"></div><div style="left:709px;top:520px;width:1px;height:23px;background:#dadada;"></div><div style="left:935px;top:520px;width:1px;height:23px;background:#dadada;"></div><div style="left:1060px;top:520px;width:1px;height:23px;background:#dadada;"></div><div style="left:1162px;top:520px;width:1px;height:23px;background:#dadada;"></div><div style="left:1276px;top:520px;width:1px;height:23px;background:#dadada;"></div><div style="left:1390px;top:520px;width:1px;height:23px;background:#dadada;"></div><div style="left:1459px;top:520px;width:1px;height:23px;background:#dadada;"></div><div style="left:1573px;top:520px;width:1px;height:23px;background:#dadada;"></div><div style="left:1687px;top:520px;width:1px;height:23px;background:#dadada;"></div><div style="left:1756px;top:520px;width:1px;height:23px;background:#dadada;"></div><div style="left:130px;top:544px;width:1740px;height:23px;background:#ffffff;"></div><div style="left:130px;top:567px;width:1740px;height:1px;background:#dadada;"></div><div style="left:130px;top:546px;width:101px;height:19px;overflow:hidden"><div class="t" style="right:26px;top:2px;font-size:15px;line-height:17px;color:#000000;transform-origin:0 14px;">3</div></div><svg style="left:214px;top:553px" width="11" height="6"><path d="M0.5 0h10l-5 5.2z" fill="#8a8a8a"/></svg><div style="left:232px;top:546px;width:251px;height:19px;overflow:hidden"><div class="t" style="left:4px;top:2px;font-size:15px;line-height:17px;color:#666666;transform-origin:0 14px;">Web Development</div></div><div style="left:484px;top:546px;width:225px;height:19px;overflow:hidden"><div class="t" style="left:4px;top:2px;font-size:15px;line-height:17px;color:#000000;transform-origin:0 14px;">Frontend Development</div></div><div style="left:710px;top:546px;width:225px;height:19px;overflow:hidden"><div class="t" style="left:4px;top:2px;font-size:15px;line-height:17px;color:#000000;transform-origin:0 14px;">Frontend Development</div></div><div style="left:936px;top:546px;width:102px;height:19px;overflow:hidden"><div class="t" style="left:4px;top:2px;font-size:15px;line-height:17px;color:#000000;transform-origin:0 14px;">Developer</div></div><svg style="left:1043px;top:553px" width="11" height="6"><path d="M0.5 0h10l-5 5.2z" fill="#8a8a8a"/></svg><svg style="left:1067px;top:549px" width="15" height="15"><circle cx="7.5" cy="7.5" r="7.5" fill="url(#go)"/></svg><div style="left:1086px;top:546px;width:54px;height:19px;overflow:hidden"><div class="t" style="left:3px;top:2px;font-size:15px;line-height:17px;color:#000000;transform-origin:0 14px;">P2 - High</div></div><svg style="left:1145px;top:553px" width="11" height="6"><path d="M0.5 0h10l-5 5.2z" fill="#8a8a8a"/></svg><div style="left:1163px;top:546px;width:113px;height:19px;overflow:hidden"><div class="t" style="right:3px;top:2px;font-size:15px;line-height:17px;color:#000000;transform-origin:0 14px;">2 Feb</div></div><div style="left:1277px;top:546px;width:113px;height:19px;overflow:hidden"><div class="t" style="right:3px;top:2px;font-size:15px;line-height:17px;color:#000000;transform-origin:0 14px;">16 Feb</div></div><svg style="left:1397px;top:549px" width="15" height="15"><rect x="0.2" y="0" width="14.6" height="15" rx="1.6" fill="#3fae6a"/><rect x="1.2" y="0" width="13.6" height="14" rx="1.4" fill="#5cd68b"/><path d="M3.3 7.6l3.3 3.4 6.2-6.5" stroke="#f4eefa" stroke-width="1.3" fill="none"/></svg><div style="left:1460px;top:544px;width:113px;height:23px;background:#d9ead3;"></div><div style="left:1460px;top:546px;width:93px;height:19px;overflow:hidden"><div class="t" style="left:4px;top:2px;font-size:15px;line-height:17px;color:#22561a;transform-origin:0 14px;">Done</div></div><svg style="left:1556px;top:553px" width="11" height="6"><path d="M0.5 0h10l-5 5.2z" fill="#4e8a3c"/></svg><div style="left:1688px;top:546px;width:68px;height:19px;overflow:hidden"><div class="t" style="right:26px;top:2px;font-size:15px;line-height:17px;color:#000000;transform-origin:0 14px;">100%</div></div><svg style="left:1739px;top:553px" width="11" height="6"><path d="M0.5 0h10l-5 5.2z" fill="#8a8a8a"/></svg><div style="left:1760px;top:546px;width:106px;height:19px;background:#6aa84f;"></div><div style="left:231px;top:544px;width:1px;height:23px;background:#dadada;"></div><div style="left:483px;top:544px;width:1px;height:23px;background:#dadada;"></div><div style="left:709px;top:544px;width:1px;height:23px;background:#dadada;"></div><div style="left:935px;top:544px;width:1px;height:23px;background:#dadada;"></div><div style="left:1060px;top:544px;width:1px;height:23px;background:#dadada;"></div><div style="left:1162px;top:544px;width:1px;height:23px;background:#dadada;"></div><div style="left:1276px;top:544px;width:1px;height:23px;background:#dadada;"></div><div style="left:1390px;top:544px;width:1px;height:23px;background:#dadada;"></div><div style="left:1459px;top:544px;width:1px;height:23px;background:#dadada;"></div><div style="left:1573px;top:544px;width:1px;height:23px;background:#dadada;"></div><div style="left:1687px;top:544px;width:1px;height:23px;background:#dadada;"></div><div style="left:1756px;top:544px;width:1px;height:23px;background:#dadada;"></div><div style="left:130px;top:568px;width:1740px;height:23px;background:#e0f2f1;"></div><div style="left:130px;top:591px;width:1740px;height:1px;background:#dadada;"></div><div style="left:130px;top:570px;width:101px;height:19px;overflow:hidden"><div class="t" style="right:26px;top:2px;font-size:15px;line-height:17px;color:#000000;transform-origin:0 14px;">3</div></div><svg style="left:214px;top:577px" width="11" height="6"><path d="M0.5 0h10l-5 5.2z" fill="#3d9a8f"/></svg><div style="left:232px;top:570px;width:251px;height:19px;overflow:hidden"><div class="t" style="left:4px;top:2px;font-size:15px;line-height:17px;color:#666666;transform-origin:0 14px;">Web Development</div></div><div style="left:484px;top:570px;width:225px;height:19px;overflow:hidden"><div class="t" style="left:4px;top:2px;font-size:15px;line-height:17px;color:#000000;transform-origin:0 14px;">Backend Integration</div></div><div style="left:710px;top:570px;width:225px;height:19px;overflow:hidden"><div class="t" style="left:4px;top:2px;font-size:15px;line-height:17px;color:#000000;transform-origin:0 14px;">Backend Integration</div></div><div style="left:936px;top:570px;width:102px;height:19px;overflow:hidden"><div class="t" style="left:4px;top:2px;font-size:15px;line-height:17px;color:#000000;transform-origin:0 14px;">Developer</div></div><svg style="left:1043px;top:577px" width="11" height="6"><path d="M0.5 0h10l-5 5.2z" fill="#3d9a8f"/></svg><svg style="left:1067px;top:573px" width="15" height="15"><circle cx="7.5" cy="7.5" r="7.5" fill="url(#go)"/></svg><div style="left:1086px;top:570px;width:54px;height:19px;overflow:hidden"><div class="t" style="left:3px;top:2px;font-size:15px;line-height:17px;color:#000000;transform-origin:0 14px;">P2 - High</div></div><svg style="left:1145px;top:577px" width="11" height="6"><path d="M0.5 0h10l-5 5.2z" fill="#3d9a8f"/></svg><div style="left:1163px;top:570px;width:113px;height:19px;overflow:hidden"><div class="t" style="right:3px;top:2px;font-size:15px;line-height:17px;color:#000000;transform-origin:0 14px;">2 Feb</div></div><div style="left:1277px;top:570px;width:113px;height:19px;overflow:hidden"><div class="t" style="right:3px;top:2px;font-size:15px;line-height:17px;color:#000000;transform-origin:0 14px;">16 Feb</div></div><svg style="left:1397px;top:573px" width="15" height="15"><rect x="0.2" y="0" width="14.6" height="15" rx="1.6" fill="#3fae6a"/><rect x="1.2" y="0" width="13.6" height="14" rx="1.4" fill="#5cd68b"/><path d="M3.3 7.6l3.3 3.4 6.2-6.5" stroke="#f4eefa" stroke-width="1.3" fill="none"/></svg><div style="left:1460px;top:568px;width:113px;height:23px;background:#d9ead3;"></div><div style="left:1460px;top:570px;width:93px;height:19px;overflow:hidden"><div class="t" style="left:4px;top:2px;font-size:15px;line-height:17px;color:#22561a;transform-origin:0 14px;">Done</div></div><svg style="left:1556px;top:577px" width="11" height="6"><path d="M0.5 0h10l-5 5.2z" fill="#4e8a3c"/></svg><div style="left:1688px;top:570px;width:68px;height:19px;overflow:hidden"><div class="t" style="right:26px;top:2px;font-size:15px;line-height:17px;color:#000000;transform-origin:0 14px;">100%</div></div><svg style="left:1739px;top:577px" width="11" height="6"><path d="M0.5 0h10l-5 5.2z" fill="#3d9a8f"/></svg><div style="left:1760px;top:570px;width:106px;height:19px;background:#6aa84f;"></div><div style="left:231px;top:568px;width:1px;height:23px;background:#dadada;"></div><div style="left:483px;top:568px;width:1px;height:23px;background:#dadada;"></div><div style="left:709px;top:568px;width:1px;height:23px;background:#dadada;"></div><div style="left:935px;top:568px;width:1px;height:23px;background:#dadada;"></div><div style="left:1060px;top:568px;width:1px;height:23px;background:#dadada;"></div><div style="left:1162px;top:568px;width:1px;height:23px;background:#dadada;"></div><div style="left:1276px;top:568px;width:1px;height:23px;background:#dadada;"></div><div style="left:1390px;top:568px;width:1px;height:23px;background:#dadada;"></div><div style="left:1459px;top:568px;width:1px;height:23px;background:#dadada;"></div><div style="left:1573px;top:568px;width:1px;height:23px;background:#dadada;"></div><div style="left:1687px;top:568px;width:1px;height:23px;background:#dadada;"></div><div style="left:1756px;top:568px;width:1px;height:23px;background:#dadada;"></div><div style="left:130px;top:592px;width:1740px;height:23px;background:#ffffff;"></div><div style="left:130px;top:615px;width:1740px;height:1px;background:#dadada;"></div><div style="left:130px;top:594px;width:101px;height:19px;overflow:hidden"><div class="t" style="right:26px;top:2px;font-size:15px;line-height:17px;color:#000000;transform-origin:0 14px;">3</div></div><svg style="left:214px;top:601px" width="11" height="6"><path d="M0.5 0h10l-5 5.2z" fill="#8a8a8a"/></svg><div style="left:232px;top:594px;width:251px;height:19px;overflow:hidden"><div class="t" style="left:4px;top:2px;font-size:15px;line-height:17px;color:#666666;transform-origin:0 14px;">Web Development</div></div><div style="left:484px;top:594px;width:225px;height:19px;overflow:hidden"><div class="t" style="left:4px;top:2px;font-size:15px;line-height:17px;color:#000000;transform-origin:0 14px;">UAT Testing</div></div><div style="left:710px;top:594px;width:225px;height:19px;overflow:hidden"><div class="t" style="left:4px;top:2px;font-size:15px;line-height:17px;color:#000000;transform-origin:0 14px;">UAT Testing</div></div><div style="left:936px;top:594px;width:102px;height:19px;overflow:hidden"><div class="t" style="left:4px;top:2px;font-size:15px;line-height:17px;color:#000000;transform-origin:0 14px;">Developer</div></div><svg style="left:1043px;top:601px" width="11" height="6"><path d="M0.5 0h10l-5 5.2z" fill="#8a8a8a"/></svg><svg style="left:1067px;top:597px" width="15" height="15"><circle cx="7.5" cy="7.5" r="7.5" fill="url(#go)"/></svg><div style="left:1086px;top:594px;width:54px;height:19px;overflow:hidden"><div class="t" style="left:3px;top:2px;font-size:15px;line-height:17px;color:#000000;transform-origin:0 14px;">P2 - High</div></div><svg style="left:1145px;top:601px" width="11" height="6"><path d="M0.5 0h10l-5 5.2z" fill="#8a8a8a"/></svg><div style="left:1163px;top:594px;width:113px;height:19px;overflow:hidden"><div class="t" style="right:3px;top:2px;font-size:15px;line-height:17px;color:#000000;transform-origin:0 14px;">14 Feb</div></div><div style="left:1277px;top:594px;width:113px;height:19px;overflow:hidden"><div class="t" style="right:3px;top:2px;font-size:15px;line-height:17px;color:#000000;transform-origin:0 14px;">16 Feb</div></div><svg style="left:1397px;top:597px" width="15" height="15"><rect x="0.2" y="0" width="14.6" height="15" rx="1.6" fill="#3fae6a"/><rect x="1.2" y="0" width="13.6" height="14" rx="1.4" fill="#5cd68b"/><path d="M3.3 7.6l3.3 3.4 6.2-6.5" stroke="#f4eefa" stroke-width="1.3" fill="none"/></svg><div style="left:1460px;top:592px;width:113px;height:23px;background:#d9ead3;"></div><div style="left:1460px;top:594px;width:93px;height:19px;overflow:hidden"><div class="t" style="left:4px;top:2px;font-size:15px;line-height:17px;color:#22561a;transform-origin:0 14px;">Done</div></div><svg style="left:1556px;top:601px" width="11" height="6"><path d="M0.5 0h10l-5 5.2z" fill="#4e8a3c"/></svg><div style="left:1688px;top:594px;width:68px;height:19px;overflow:hidden"><div class="t" style="right:26px;top:2px;font-size:15px;line-height:17px;color:#000000;transform-origin:0 14px;">100%</div></div><svg style="left:1739px;top:601px" width="11" height="6"><path d="M0.5 0h10l-5 5.2z" fill="#8a8a8a"/></svg><div style="left:1760px;top:594px;width:106px;height:19px;background:#6aa84f;"></div><div style="left:231px;top:592px;width:1px;height:23px;background:#dadada;"></div><div style="left:483px;top:592px;width:1px;height:23px;background:#dadada;"></div><div style="left:709px;top:592px;width:1px;height:23px;background:#dadada;"></div><div style="left:935px;top:592px;width:1px;height:23px;background:#dadada;"></div><div style="left:1060px;top:592px;width:1px;height:23px;background:#dadada;"></div><div style="left:1162px;top:592px;width:1px;height:23px;background:#dadada;"></div><div style="left:1276px;top:592px;width:1px;height:23px;background:#dadada;"></div><div style="left:1390px;top:592px;width:1px;height:23px;background:#dadada;"></div><div style="left:1459px;top:592px;width:1px;height:23px;background:#dadada;"></div><div style="left:1573px;top:592px;width:1px;height:23px;background:#dadada;"></div><div style="left:1687px;top:592px;width:1px;height:23px;background:#dadada;"></div><div style="left:1756px;top:592px;width:1px;height:23px;background:#dadada;"></div><div style="left:130px;top:616px;width:1740px;height:23px;background:#e0f2f1;"></div><div style="left:130px;top:639px;width:1740px;height:1px;background:#dadada;"></div><div style="left:130px;top:618px;width:101px;height:19px;overflow:hidden"><div class="t" style="right:26px;top:2px;font-size:15px;line-height:17px;color:#000000;transform-origin:0 14px;">3</div></div><svg style="left:214px;top:625px" width="11" height="6"><path d="M0.5 0h10l-5 5.2z" fill="#3d9a8f"/></svg><div style="left:232px;top:618px;width:251px;height:19px;overflow:hidden"><div class="t" style="left:4px;top:2px;font-size:15px;line-height:17px;color:#666666;transform-origin:0 14px;">Web Development</div></div><div style="left:484px;top:618px;width:225px;height:19px;overflow:hidden"><div class="t" style="left:4px;top:2px;font-size:15px;line-height:17px;color:#000000;transform-origin:0 14px;">Deploy &amp; Live</div></div><div style="left:710px;top:618px;width:225px;height:19px;overflow:hidden"><div class="t" style="left:4px;top:2px;font-size:15px;line-height:17px;color:#000000;transform-origin:0 14px;">Deploy &amp; Live</div></div><div style="left:936px;top:618px;width:102px;height:19px;overflow:hidden"><div class="t" style="left:4px;top:2px;font-size:15px;line-height:17px;color:#000000;transform-origin:0 14px;">Developer</div></div><svg style="left:1043px;top:625px" width="11" height="6"><path d="M0.5 0h10l-5 5.2z" fill="#3d9a8f"/></svg><svg style="left:1067px;top:621px" width="15" height="15"><circle cx="7.5" cy="7.5" r="7.5" fill="url(#go)"/></svg><div style="left:1086px;top:618px;width:54px;height:19px;overflow:hidden"><div class="t" style="left:3px;top:2px;font-size:15px;line-height:17px;color:#000000;transform-origin:0 14px;">P2 - High</div></div><svg style="left:1145px;top:625px" width="11" height="6"><path d="M0.5 0h10l-5 5.2z" fill="#3d9a8f"/></svg><div style="left:1163px;top:618px;width:113px;height:19px;overflow:hidden"><div class="t" style="right:3px;top:2px;font-size:15px;line-height:17px;color:#000000;transform-origin:0 14px;">2 Feb</div></div><div style="left:1277px;top:618px;width:113px;height:19px;overflow:hidden"><div class="t" style="right:3px;top:2px;font-size:15px;line-height:17px;color:#000000;transform-origin:0 14px;">16 Feb</div></div><svg style="left:1397px;top:621px" width="15" height="15"><rect x="0.2" y="0" width="14.6" height="15" rx="1.6" fill="#3fae6a"/><rect x="1.2" y="0" width="13.6" height="14" rx="1.4" fill="#5cd68b"/><path d="M3.3 7.6l3.3 3.4 6.2-6.5" stroke="#f4eefa" stroke-width="1.3" fill="none"/></svg><div style="left:1460px;top:616px;width:113px;height:23px;background:#d9ead3;"></div><div style="left:1460px;top:618px;width:93px;height:19px;overflow:hidden"><div class="t" style="left:4px;top:2px;font-size:15px;line-height:17px;color:#22561a;transform-origin:0 14px;">Done</div></div><svg style="left:1556px;top:625px" width="11" height="6"><path d="M0.5 0h10l-5 5.2z" fill="#4e8a3c"/></svg><div style="left:1688px;top:618px;width:68px;height:19px;overflow:hidden"><div class="t" style="right:26px;top:2px;font-size:15px;line-height:17px;color:#000000;transform-origin:0 14px;">100%</div></div><svg style="left:1739px;top:625px" width="11" height="6"><path d="M0.5 0h10l-5 5.2z" fill="#3d9a8f"/></svg><div style="left:1760px;top:618px;width:106px;height:19px;background:#6aa84f;"></div><div style="left:231px;top:616px;width:1px;height:23px;background:#dadada;"></div><div style="left:483px;top:616px;width:1px;height:23px;background:#dadada;"></div><div style="left:709px;top:616px;width:1px;height:23px;background:#dadada;"></div><div style="left:935px;top:616px;width:1px;height:23px;background:#dadada;"></div><div style="left:1060px;top:616px;width:1px;height:23px;background:#dadada;"></div><div style="left:1162px;top:616px;width:1px;height:23px;background:#dadada;"></div><div style="left:1276px;top:616px;width:1px;height:23px;background:#dadada;"></div><div style="left:1390px;top:616px;width:1px;height:23px;background:#dadada;"></div><div style="left:1459px;top:616px;width:1px;height:23px;background:#dadada;"></div><div style="left:1573px;top:616px;width:1px;height:23px;background:#dadada;"></div><div style="left:1687px;top:616px;width:1px;height:23px;background:#dadada;"></div><div style="left:1756px;top:616px;width:1px;height:23px;background:#dadada;"></div><div style="left:130px;top:640px;width:1740px;height:23px;background:#ffffff;"></div><div style="left:130px;top:663px;width:1740px;height:1px;background:#dadada;"></div><div style="left:130px;top:642px;width:101px;height:19px;overflow:hidden"><div class="t" style="right:26px;top:2px;font-size:15px;line-height:17px;color:#000000;transform-origin:0 14px;">4</div></div><svg style="left:214px;top:649px" width="11" height="6"><path d="M0.5 0h10l-5 5.2z" fill="#8a8a8a"/></svg><div style="left:232px;top:642px;width:251px;height:19px;overflow:hidden"><div class="t" style="left:4px;top:2px;font-size:15px;line-height:17px;color:#666666;transform-origin:0 14px;">UI/UX Design</div></div><div style="left:484px;top:642px;width:225px;height:19px;overflow:hidden"><div class="t" style="left:4px;top:2px;font-size:15px;line-height:17px;color:#000000;transform-origin:0 14px;">Riset pengguna dan kompetitor</div></div><div style="left:710px;top:642px;width:225px;height:19px;overflow:hidden"><div class="t" style="left:4px;top:2px;font-size:15px;line-height:17px;color:#000000;transform-origin:0 14px;">Riset pengguna dan kompetitor</div></div><div style="left:936px;top:642px;width:102px;height:19px;overflow:hidden"><div class="t" style="left:4px;top:2px;font-size:15px;line-height:17px;color:#000000;transform-origin:0 14px;">Designer 1</div></div><svg style="left:1043px;top:649px" width="11" height="6"><path d="M0.5 0h10l-5 5.2z" fill="#8a8a8a"/></svg><svg style="left:1067px;top:645px" width="15" height="15"><circle cx="7.5" cy="7.5" r="7.5" fill="url(#gb)"/></svg><div style="left:1086px;top:642px;width:54px;height:19px;overflow:hidden"><div class="t" style="left:3px;top:2px;font-size:15px;line-height:17px;color:#000000;transform-origin:0 14px;">P3 - Normal</div></div><svg style="left:1145px;top:649px" width="11" height="6"><path d="M0.5 0h10l-5 5.2z" fill="#8a8a8a"/></svg><div style="left:1163px;top:642px;width:113px;height:19px;overflow:hidden"><div class="t" style="right:3px;top:2px;font-size:15px;line-height:17px;color:#000000;transform-origin:0 14px;">2 Feb</div></div><div style="left:1277px;top:642px;width:113px;height:19px;overflow:hidden"><div class="t" style="right:3px;top:2px;font-size:15px;line-height:17px;color:#000000;transform-origin:0 14px;">16 Feb</div></div><svg style="left:1397px;top:645px" width="15" height="15"><rect x="0.2" y="0" width="14.6" height="15" rx="1.6" fill="#3fae6a"/><rect x="1.2" y="0" width="13.6" height="14" rx="1.4" fill="#5cd68b"/><path d="M3.3 7.6l3.3 3.4 6.2-6.5" stroke="#f4eefa" stroke-width="1.3" fill="none"/></svg><div style="left:1460px;top:640px;width:113px;height:23px;background:#d9ead3;"></div><div style="left:1460px;top:642px;width:93px;height:19px;overflow:hidden"><div class="t" style="left:4px;top:2px;font-size:15px;line-height:17px;color:#22561a;transform-origin:0 14px;">Done</div></div><svg style="left:1556px;top:649px" width="11" height="6"><path d="M0.5 0h10l-5 5.2z" fill="#4e8a3c"/></svg><div style="left:1688px;top:642px;width:68px;height:19px;overflow:hidden"><div class="t" style="right:26px;top:2px;font-size:15px;line-height:17px;color:#000000;transform-origin:0 14px;">100%</div></div><svg style="left:1739px;top:649px" width="11" height="6"><path d="M0.5 0h10l-5 5.2z" fill="#8a8a8a"/></svg><div style="left:1760px;top:642px;width:106px;height:19px;background:#6aa84f;"></div><div style="left:231px;top:640px;width:1px;height:23px;background:#dadada;"></div><div style="left:483px;top:640px;width:1px;height:23px;background:#dadada;"></div><div style="left:709px;top:640px;width:1px;height:23px;background:#dadada;"></div><div style="left:935px;top:640px;width:1px;height:23px;background:#dadada;"></div><div style="left:1060px;top:640px;width:1px;height:23px;background:#dadada;"></div><div style="left:1162px;top:640px;width:1px;height:23px;background:#dadada;"></div><div style="left:1276px;top:640px;width:1px;height:23px;background:#dadada;"></div><div style="left:1390px;top:640px;width:1px;height:23px;background:#dadada;"></div><div style="left:1459px;top:640px;width:1px;height:23px;background:#dadada;"></div><div style="left:1573px;top:640px;width:1px;height:23px;background:#dadada;"></div><div style="left:1687px;top:640px;width:1px;height:23px;background:#dadada;"></div><div style="left:1756px;top:640px;width:1px;height:23px;background:#dadada;"></div><div style="left:130px;top:664px;width:1740px;height:23px;background:#e0f2f1;"></div><div style="left:130px;top:687px;width:1740px;height:1px;background:#dadada;"></div><div style="left:130px;top:666px;width:101px;height:19px;overflow:hidden"><div class="t" style="right:26px;top:2px;font-size:15px;line-height:17px;color:#000000;transform-origin:0 14px;">4</div></div><svg style="left:214px;top:673px" width="11" height="6"><path d="M0.5 0h10l-5 5.2z" fill="#3d9a8f"/></svg><div style="left:232px;top:666px;width:251px;height:19px;overflow:hidden"><div class="t" style="left:4px;top:2px;font-size:15px;line-height:17px;color:#666666;transform-origin:0 14px;">UI/UX Design</div></div><div style="left:484px;top:666px;width:225px;height:19px;overflow:hidden"><div class="t" style="left:4px;top:2px;font-size:15px;line-height:17px;color:#000000;transform-origin:0 14px;">Buat wireframe dan prototype</div></div><div style="left:710px;top:666px;width:225px;height:19px;overflow:hidden"><div class="t" style="left:4px;top:2px;font-size:15px;line-height:17px;color:#000000;transform-origin:0 14px;">Buat wireframe dan prototype</div></div><div style="left:936px;top:666px;width:102px;height:19px;overflow:hidden"><div class="t" style="left:4px;top:2px;font-size:15px;line-height:17px;color:#000000;transform-origin:0 14px;">Designer 2</div></div><svg style="left:1043px;top:673px" width="11" height="6"><path d="M0.5 0h10l-5 5.2z" fill="#3d9a8f"/></svg><svg style="left:1067px;top:669px" width="15" height="15"><circle cx="7.5" cy="7.5" r="7.5" fill="url(#gb)"/></svg><div style="left:1086px;top:666px;width:54px;height:19px;overflow:hidden"><div class="t" style="left:3px;top:2px;font-size:15px;line-height:17px;color:#000000;transform-origin:0 14px;">P3 - Normal</div></div><svg style="left:1145px;top:673px" width="11" height="6"><path d="M0.5 0h10l-5 5.2z" fill="#3d9a8f"/></svg><div style="left:1163px;top:666px;width:113px;height:19px;overflow:hidden"><div class="t" style="right:3px;top:2px;font-size:15px;line-height:17px;color:#000000;transform-origin:0 14px;">2 Feb</div></div><div style="left:1277px;top:666px;width:113px;height:19px;overflow:hidden"><div class="t" style="right:3px;top:2px;font-size:15px;line-height:17px;color:#000000;transform-origin:0 14px;">16 Feb</div></div><svg style="left:1397px;top:669px" width="15" height="15"><rect x="0.2" y="0" width="14.6" height="15" rx="1.6" fill="#3fae6a"/><rect x="1.2" y="0" width="13.6" height="14" rx="1.4" fill="#5cd68b"/><path d="M3.3 7.6l3.3 3.4 6.2-6.5" stroke="#f4eefa" stroke-width="1.3" fill="none"/></svg><div style="left:1460px;top:664px;width:113px;height:23px;background:#d9ead3;"></div><div style="left:1460px;top:666px;width:93px;height:19px;overflow:hidden"><div class="t" style="left:4px;top:2px;font-size:15px;line-height:17px;color:#22561a;transform-origin:0 14px;">Done</div></div><svg style="left:1556px;top:673px" width="11" height="6"><path d="M0.5 0h10l-5 5.2z" fill="#4e8a3c"/></svg><div style="left:1688px;top:666px;width:68px;height:19px;overflow:hidden"><div class="t" style="right:26px;top:2px;font-size:15px;line-height:17px;color:#000000;transform-origin:0 14px;">100%</div></div><svg style="left:1739px;top:673px" width="11" height="6"><path d="M0.5 0h10l-5 5.2z" fill="#3d9a8f"/></svg><div style="left:1760px;top:666px;width:106px;height:19px;background:#6aa84f;"></div><div style="left:231px;top:664px;width:1px;height:23px;background:#dadada;"></div><div style="left:483px;top:664px;width:1px;height:23px;background:#dadada;"></div><div style="left:709px;top:664px;width:1px;height:23px;background:#dadada;"></div><div style="left:935px;top:664px;width:1px;height:23px;background:#dadada;"></div><div style="left:1060px;top:664px;width:1px;height:23px;background:#dadada;"></div><div style="left:1162px;top:664px;width:1px;height:23px;background:#dadada;"></div><div style="left:1276px;top:664px;width:1px;height:23px;background:#dadada;"></div><div style="left:1390px;top:664px;width:1px;height:23px;background:#dadada;"></div><div style="left:1459px;top:664px;width:1px;height:23px;background:#dadada;"></div><div style="left:1573px;top:664px;width:1px;height:23px;background:#dadada;"></div><div style="left:1687px;top:664px;width:1px;height:23px;background:#dadada;"></div><div style="left:1756px;top:664px;width:1px;height:23px;background:#dadada;"></div><div style="left:130px;top:688px;width:1740px;height:23px;background:#ffffff;"></div><div style="left:130px;top:711px;width:1740px;height:1px;background:#dadada;"></div><div style="left:130px;top:690px;width:101px;height:19px;overflow:hidden"><div class="t" style="right:26px;top:2px;font-size:15px;line-height:17px;color:#000000;transform-origin:0 14px;">4</div></div><svg style="left:214px;top:697px" width="11" height="6"><path d="M0.5 0h10l-5 5.2z" fill="#8a8a8a"/></svg><div style="left:232px;top:690px;width:251px;height:19px;overflow:hidden"><div class="t" style="left:4px;top:2px;font-size:15px;line-height:17px;color:#666666;transform-origin:0 14px;">UI/UX Design</div></div><div style="left:484px;top:690px;width:225px;height:19px;overflow:hidden"><div class="t" style="left:4px;top:2px;font-size:15px;line-height:17px;color:#000000;transform-origin:0 14px;">Desain visual antarmuka</div></div><div style="left:710px;top:690px;width:225px;height:19px;overflow:hidden"><div class="t" style="left:4px;top:2px;font-size:15px;line-height:17px;color:#000000;transform-origin:0 14px;">Desain visual antarmuka</div></div><div style="left:936px;top:690px;width:102px;height:19px;overflow:hidden"><div class="t" style="left:4px;top:2px;font-size:15px;line-height:17px;color:#000000;transform-origin:0 14px;">Designer 1</div></div><svg style="left:1043px;top:697px" width="11" height="6"><path d="M0.5 0h10l-5 5.2z" fill="#8a8a8a"/></svg><svg style="left:1067px;top:693px" width="15" height="15"><circle cx="7.5" cy="7.5" r="7.5" fill="url(#gb)"/></svg><div style="left:1086px;top:690px;width:54px;height:19px;overflow:hidden"><div class="t" style="left:3px;top:2px;font-size:15px;line-height:17px;color:#000000;transform-origin:0 14px;">P3 - Normal</div></div><svg style="left:1145px;top:697px" width="11" height="6"><path d="M0.5 0h10l-5 5.2z" fill="#8a8a8a"/></svg><div style="left:1163px;top:690px;width:113px;height:19px;overflow:hidden"><div class="t" style="right:3px;top:2px;font-size:15px;line-height:17px;color:#000000;transform-origin:0 14px;">2 Feb</div></div><div style="left:1277px;top:690px;width:113px;height:19px;overflow:hidden"><div class="t" style="right:3px;top:2px;font-size:15px;line-height:17px;color:#000000;transform-origin:0 14px;">16 Feb</div></div><svg style="left:1397px;top:693px" width="15" height="15"><rect x="0.2" y="0" width="14.6" height="15" rx="1.6" fill="#3fae6a"/><rect x="1.2" y="0" width="13.6" height="14" rx="1.4" fill="#5cd68b"/><path d="M3.3 7.6l3.3 3.4 6.2-6.5" stroke="#f4eefa" stroke-width="1.3" fill="none"/></svg><div style="left:1460px;top:688px;width:113px;height:23px;background:#d9ead3;"></div><div style="left:1460px;top:690px;width:93px;height:19px;overflow:hidden"><div class="t" style="left:4px;top:2px;font-size:15px;line-height:17px;color:#22561a;transform-origin:0 14px;">Done</div></div><svg style="left:1556px;top:697px" width="11" height="6"><path d="M0.5 0h10l-5 5.2z" fill="#4e8a3c"/></svg><div style="left:1688px;top:690px;width:68px;height:19px;overflow:hidden"><div class="t" style="right:26px;top:2px;font-size:15px;line-height:17px;color:#000000;transform-origin:0 14px;">100%</div></div><svg style="left:1739px;top:697px" width="11" height="6"><path d="M0.5 0h10l-5 5.2z" fill="#8a8a8a"/></svg><div style="left:1760px;top:690px;width:106px;height:19px;background:#6aa84f;"></div><div style="left:231px;top:688px;width:1px;height:23px;background:#dadada;"></div><div style="left:483px;top:688px;width:1px;height:23px;background:#dadada;"></div><div style="left:709px;top:688px;width:1px;height:23px;background:#dadada;"></div><div style="left:935px;top:688px;width:1px;height:23px;background:#dadada;"></div><div style="left:1060px;top:688px;width:1px;height:23px;background:#dadada;"></div><div style="left:1162px;top:688px;width:1px;height:23px;background:#dadada;"></div><div style="left:1276px;top:688px;width:1px;height:23px;background:#dadada;"></div><div style="left:1390px;top:688px;width:1px;height:23px;background:#dadada;"></div><div style="left:1459px;top:688px;width:1px;height:23px;background:#dadada;"></div><div style="left:1573px;top:688px;width:1px;height:23px;background:#dadada;"></div><div style="left:1687px;top:688px;width:1px;height:23px;background:#dadada;"></div><div style="left:1756px;top:688px;width:1px;height:23px;background:#dadada;"></div><div style="left:130px;top:712px;width:1740px;height:23px;background:#e0f2f1;"></div><div style="left:130px;top:735px;width:1740px;height:1px;background:#dadada;"></div><div style="left:130px;top:714px;width:101px;height:19px;overflow:hidden"><div class="t" style="right:26px;top:2px;font-size:15px;line-height:17px;color:#000000;transform-origin:0 14px;">4</div></div><svg style="left:214px;top:721px" width="11" height="6"><path d="M0.5 0h10l-5 5.2z" fill="#3d9a8f"/></svg><div style="left:232px;top:714px;width:251px;height:19px;overflow:hidden"><div class="t" style="left:4px;top:2px;font-size:15px;line-height:17px;color:#666666;transform-origin:0 14px;">UI/UX Design</div></div><div style="left:484px;top:714px;width:225px;height:19px;overflow:hidden"><div class="t" style="left:4px;top:2px;font-size:15px;line-height:17px;color:#000000;transform-origin:0 14px;">Uji kegunaan dengan pengguna</div></div><div style="left:710px;top:714px;width:225px;height:19px;overflow:hidden"><div class="t" style="left:4px;top:2px;font-size:15px;line-height:17px;color:#000000;transform-origin:0 14px;">Uji kegunaan dengan pengguna</div></div><div style="left:936px;top:714px;width:102px;height:19px;overflow:hidden"><div class="t" style="left:4px;top:2px;font-size:15px;line-height:17px;color:#000000;transform-origin:0 14px;">Designer 2</div></div><svg style="left:1043px;top:721px" width="11" height="6"><path d="M0.5 0h10l-5 5.2z" fill="#3d9a8f"/></svg><svg style="left:1067px;top:717px" width="15" height="15"><circle cx="7.5" cy="7.5" r="7.5" fill="url(#gb)"/></svg><div style="left:1086px;top:714px;width:54px;height:19px;overflow:hidden"><div class="t" style="left:3px;top:2px;font-size:15px;line-height:17px;color:#000000;transform-origin:0 14px;">P3 - Normal</div></div><svg style="left:1145px;top:721px" width="11" height="6"><path d="M0.5 0h10l-5 5.2z" fill="#3d9a8f"/></svg><div style="left:1163px;top:714px;width:113px;height:19px;overflow:hidden"><div class="t" style="right:3px;top:2px;font-size:15px;line-height:17px;color:#000000;transform-origin:0 14px;">2 Feb</div></div><div style="left:1277px;top:714px;width:113px;height:19px;overflow:hidden"><div class="t" style="right:3px;top:2px;font-size:15px;line-height:17px;color:#000000;transform-origin:0 14px;">16 Feb</div></div><svg style="left:1397px;top:717px" width="15" height="15"><rect x="0.2" y="0" width="14.6" height="15" rx="1.6" fill="#3fae6a"/><rect x="1.2" y="0" width="13.6" height="14" rx="1.4" fill="#5cd68b"/><path d="M3.3 7.6l3.3 3.4 6.2-6.5" stroke="#f4eefa" stroke-width="1.3" fill="none"/></svg><div style="left:1460px;top:712px;width:113px;height:23px;background:#d9ead3;"></div><div style="left:1460px;top:714px;width:93px;height:19px;overflow:hidden"><div class="t" style="left:4px;top:2px;font-size:15px;line-height:17px;color:#22561a;transform-origin:0 14px;">Done</div></div><svg style="left:1556px;top:721px" width="11" height="6"><path d="M0.5 0h10l-5 5.2z" fill="#4e8a3c"/></svg><div style="left:1688px;top:714px;width:68px;height:19px;overflow:hidden"><div class="t" style="right:26px;top:2px;font-size:15px;line-height:17px;color:#000000;transform-origin:0 14px;">100%</div></div><svg style="left:1739px;top:721px" width="11" height="6"><path d="M0.5 0h10l-5 5.2z" fill="#3d9a8f"/></svg><div style="left:1760px;top:714px;width:106px;height:19px;background:#6aa84f;"></div><div style="left:231px;top:712px;width:1px;height:23px;background:#dadada;"></div><div style="left:483px;top:712px;width:1px;height:23px;background:#dadada;"></div><div style="left:709px;top:712px;width:1px;height:23px;background:#dadada;"></div><div style="left:935px;top:712px;width:1px;height:23px;background:#dadada;"></div><div style="left:1060px;top:712px;width:1px;height:23px;background:#dadada;"></div><div style="left:1162px;top:712px;width:1px;height:23px;background:#dadada;"></div><div style="left:1276px;top:712px;width:1px;height:23px;background:#dadada;"></div><div style="left:1390px;top:712px;width:1px;height:23px;background:#dadada;"></div><div style="left:1459px;top:712px;width:1px;height:23px;background:#dadada;"></div><div style="left:1573px;top:712px;width:1px;height:23px;background:#dadada;"></div><div style="left:1687px;top:712px;width:1px;height:23px;background:#dadada;"></div><div style="left:1756px;top:712px;width:1px;height:23px;background:#dadada;"></div><div style="left:130px;top:736px;width:1740px;height:3px;background:#ffffff;"></div><div style="left:231px;top:736px;width:1px;height:3px;background:#dadada;"></div><div style="left:483px;top:736px;width:1px;height:3px;background:#dadada;"></div><div style="left:709px;top:736px;width:1px;height:3px;background:#dadada;"></div><div style="left:935px;top:736px;width:1px;height:3px;background:#dadada;"></div><div style="left:1060px;top:736px;width:1px;height:3px;background:#dadada;"></div><div style="left:1162px;top:736px;width:1px;height:3px;background:#dadada;"></div><div style="left:1276px;top:736px;width:1px;height:3px;background:#dadada;"></div><div style="left:1390px;top:736px;width:1px;height:3px;background:#dadada;"></div><div style="left:1459px;top:736px;width:1px;height:3px;background:#dadada;"></div><div style="left:1573px;top:736px;width:1px;height:3px;background:#dadada;"></div><div style="left:1687px;top:736px;width:1px;height:3px;background:#dadada;"></div><div style="left:1756px;top:736px;width:1px;height:3px;background:#dadada;"></div><div style="left:129px;top:215px;width:1px;height:524px;background:#188038;"></div><div style="left:1870px;top:215px;width:1px;height:524px;background:#188038;"></div><div style="left:129px;top:215px;width:1742px;height:1px;background:#188038;"></div><div style="left:130px;top:255px;width:1740px;height:1px;background:#dadada;"></div><div style="left:0px;top:739px;width:1907px;height:1px;background:#dadada;"></div><div style="left:0px;top:740px;width:1919px;height:12px;background:#ffffff;"></div><div style="left:0px;top:740px;width:51px;height:12px;background:#f8f9fa;"></div><div style="left:51px;top:740px;width:1px;height:12px;background:#c7c7c7;"></div><div style="left:74px;top:741px;width:1046px;height:10px;border-radius:5px;background:#dadada"></div><div style="left:1873px;top:740px;width:46px;height:12px;background:#f8f8f8;"></div><div style="left:1873px;top:740px;width:1px;height:12px;background:#e8e8e8;"></div><div style="left:1891px;top:740px;width:1px;height:12px;background:#e8e8e8;"></div><div style="left:1907px;top:740px;width:1px;height:12px;background:#e8e8e8;"></div><svg style="left:1879px;top:743px" width="30" height="7"><path d="M3.8 0.3v6l-3.2-3z M20 0.3v6l3.2-3z" fill="#9e9e9e"/></svg><div style="left:1908px;top:42px;width:11px;height:1px;background:#c7c7c7;"></div><div style="left:1908px;top:43px;width:11px;height:26px;background:#f8f8f8;"></div><div style="left:1908px;top:69px;width:11px;height:1px;background:#dde6f0;"></div><div style="left:1908px;top:704px;width:11px;height:35px;background:#f8f8f8;"></div><div style="left:1907px;top:42px;width:1px;height:698px;background:#dadada;"></div><div style="left:1909px;top:71px;width:10px;height:29px;border-radius:5px;background:#dadada"></div><div style="left:1908px;top:704px;width:11px;height:1px;background:#e8e8e8;"></div><div style="left:1908px;top:722px;width:11px;height:1px;background:#e8e8e8;"></div><svg style="left:1910px;top:709px" width="9" height="26"><path d="M1 4.5l3.8-3.5 3.8 3.5z M1 20l3.8 3.5 3.8-3.5z" fill="#9e9e9e"/></svg>
</body></html>
